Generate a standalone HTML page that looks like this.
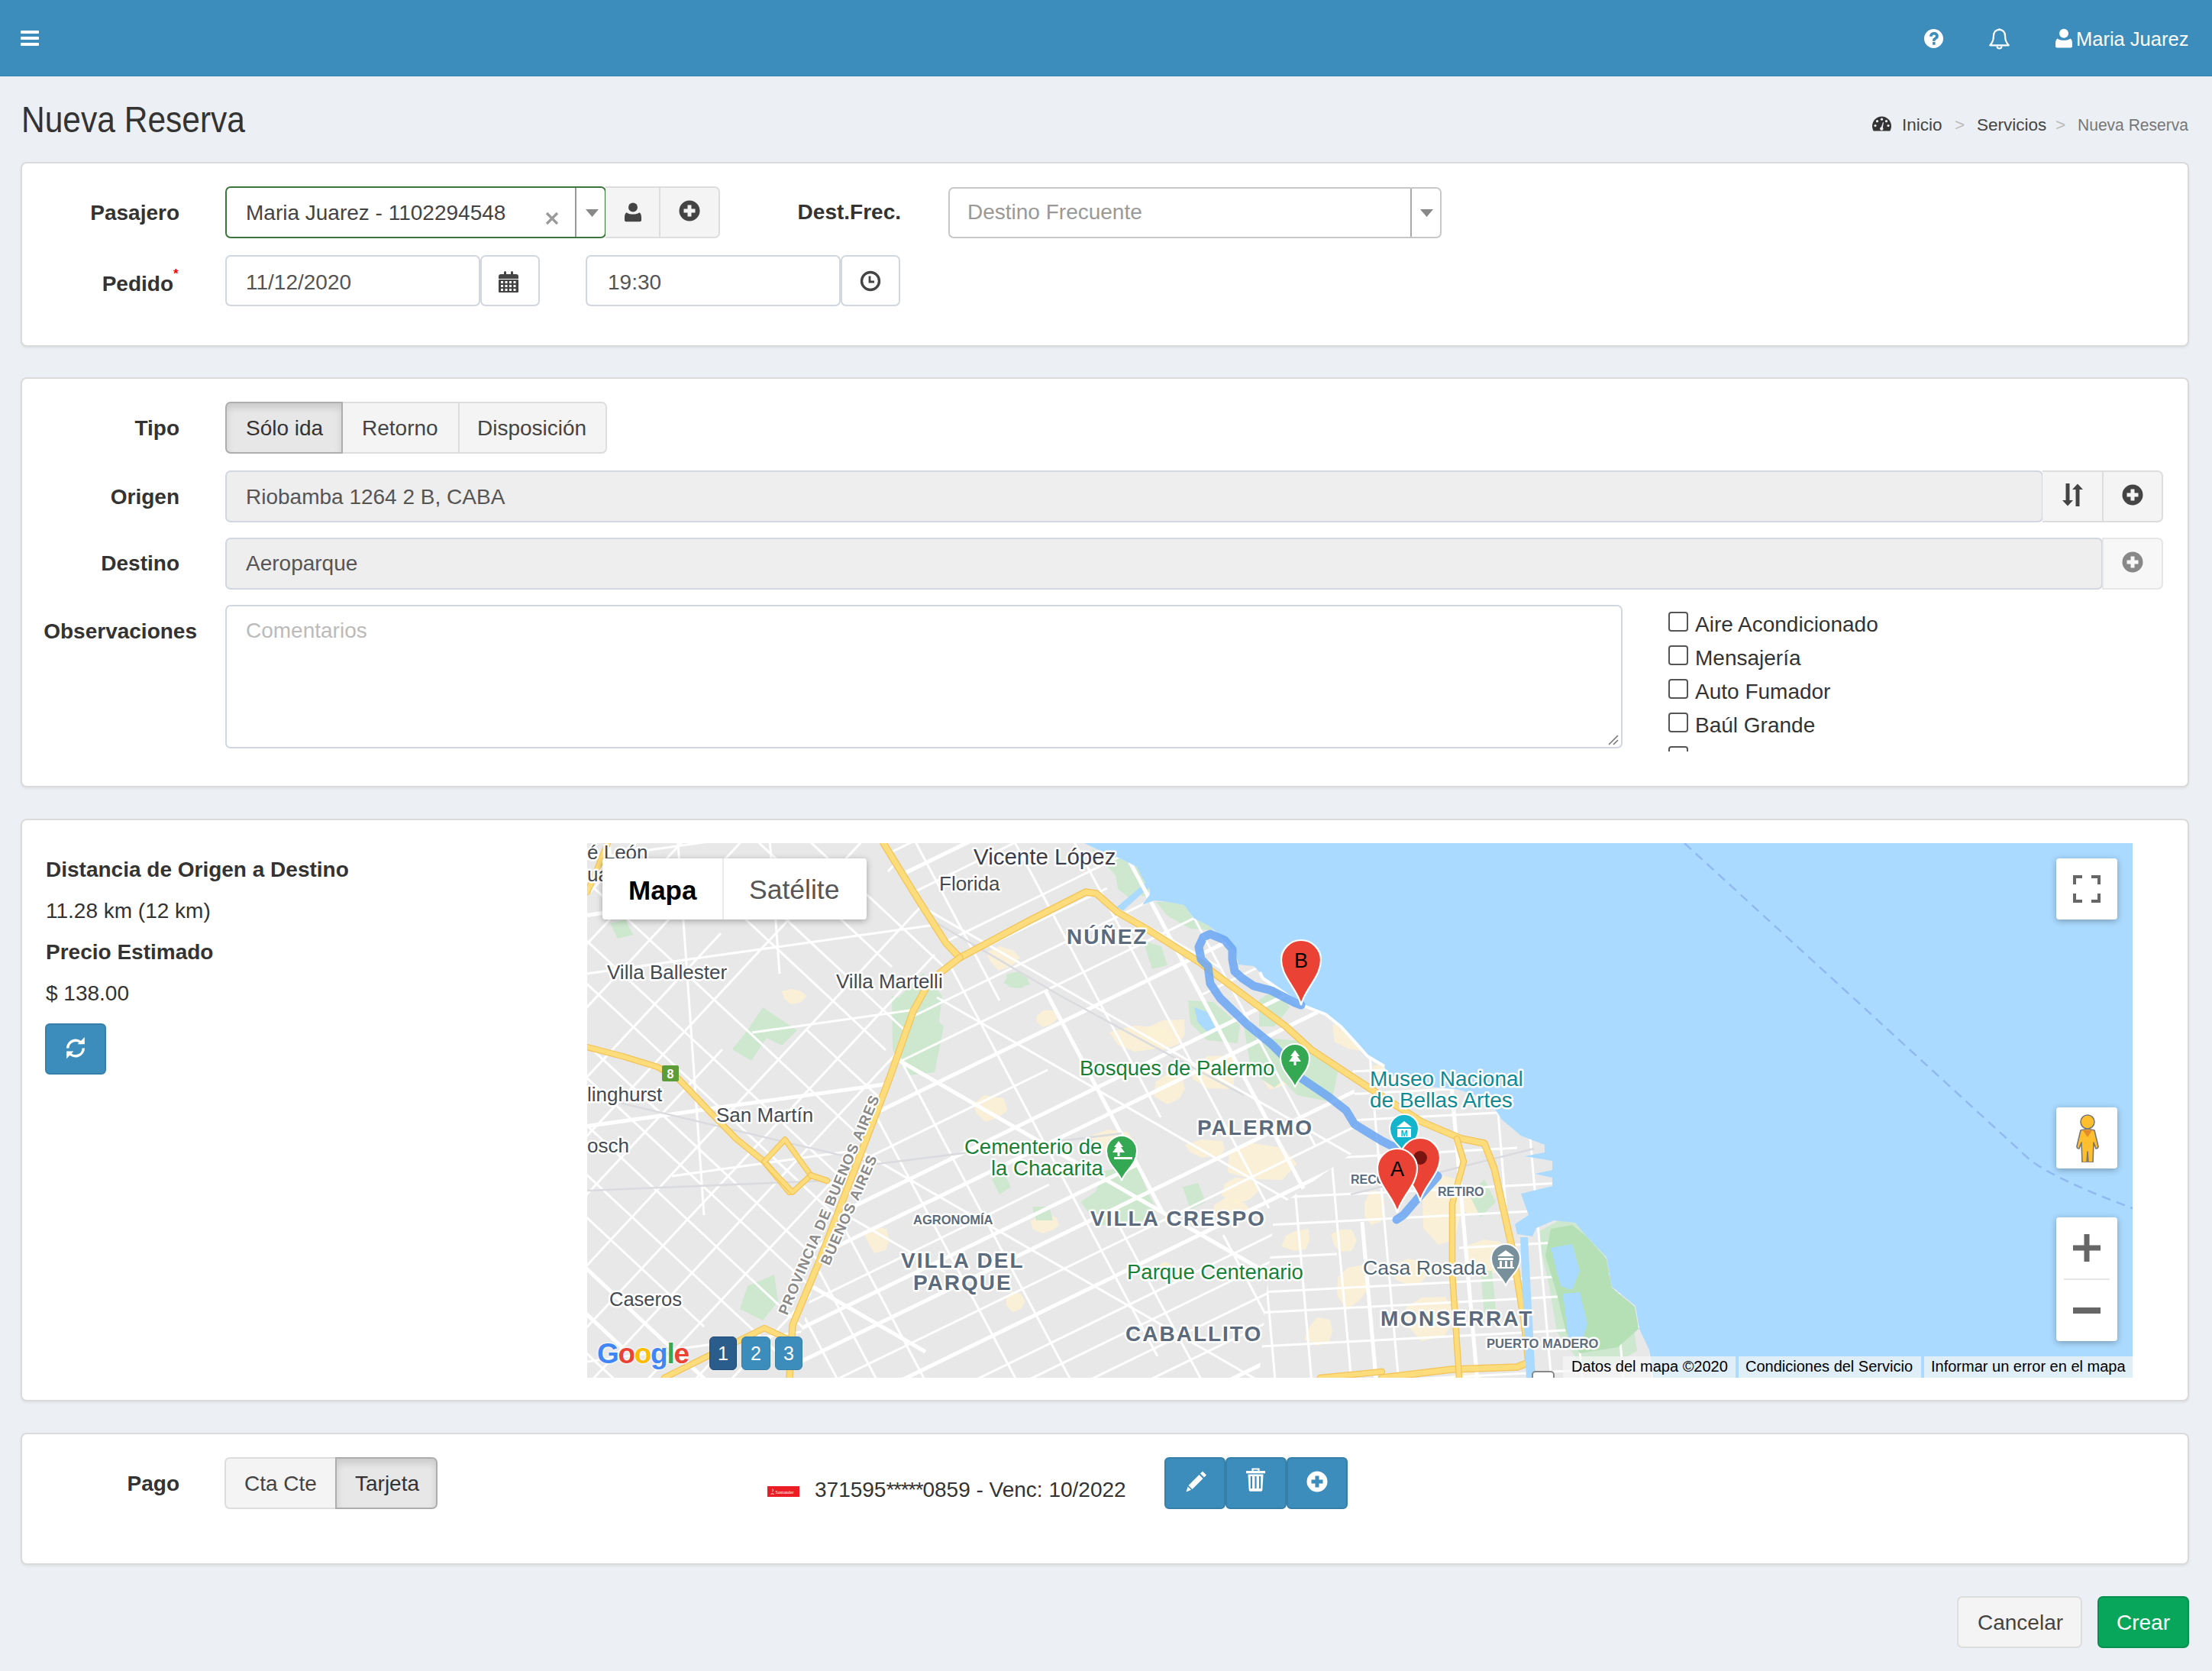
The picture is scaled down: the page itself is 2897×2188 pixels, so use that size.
<!DOCTYPE html>
<html><head><meta charset="utf-8">
<style>
*{box-sizing:border-box;margin:0;padding:0}
html,body{width:2897px;height:2188px;overflow:hidden;background:#ecf0f5;font-family:"Liberation Sans",sans-serif;color:#333}
.a{position:absolute}
.t{position:absolute;line-height:1;white-space:nowrap}
.hdr{left:0;top:0;width:2897px;height:100px;background:#3c8dbc;border-bottom:1px solid #2e83b5}
.box{position:absolute;left:27px;width:2840px;background:#fff;border:2px solid #dadada;border-radius:8px;box-shadow:0 2px 3px rgba(0,0,0,.06)}
.lbl{position:absolute;font-weight:700;font-size:28px;line-height:1;white-space:nowrap;text-align:right;color:#333}
.inp{position:absolute;background:#fff;border:2px solid #d2d6de;border-radius:7px}
.ro{background:#eee}
.txt{font-size:28px;color:#555}
.btn{position:absolute;background:#f4f4f4;border:2px solid #ddd;color:#444}
.bp{position:absolute;background:#3c8dbc;border:2px solid #367fa9}
</style></head><body>
<!-- HEADER -->
<div class="a hdr"></div>
<div class="a" style="left:27px;top:40px;width:24px;height:4px;background:#fff;border-radius:1px"></div>
<div class="a" style="left:27px;top:48px;width:24px;height:4px;background:#fff;border-radius:1px"></div>
<div class="a" style="left:27px;top:56px;width:24px;height:4px;background:#fff;border-radius:1px"></div>


<!-- header right -->
<svg class="a" style="left:2520px;top:38px" width="25" height="25" viewBox="0 0 24 24"><circle cx="12" cy="12" r="12" fill="#fff"/><path d="M6.8,9.3 C6.8,5.8 9.3,3.8 12.4,3.8 C15.6,3.8 18.1,5.8 18.1,8.8 C18.1,11.2 16.6,12.3 15.1,13.2 C14.3,13.7 14,14.1 14,14.8 V15.2 H10.6 V14.4 C10.6,12.6 11.4,11.6 12.8,10.8 C13.8,10.2 14.4,9.7 14.4,8.9 C14.4,7.9 13.6,7.2 12.4,7.2 C11.2,7.2 10.4,8 10.3,9.3 z" fill="#3c8dbc"/><rect x="10.6" y="16.4" width="3.4" height="3.5" fill="#3c8dbc"/></svg>
<svg class="a" style="left:2605px;top:35px" width="27" height="30" viewBox="0 0 27 30"><path d="M13.5 2.2v1.6M13.5 3.8c-5 0-7.6 3.8-7.6 8.6 0 5.4-1.4 8.4-4.6 11.9h24.4c-3.2-3.5-4.6-6.5-4.6-11.9 0-4.8-2.6-8.6-7.6-8.6z" fill="none" stroke="#fff" stroke-width="2.2" stroke-linejoin="round"/><path d="M10.5 25.5a3 3 0 0 0 6 0" fill="none" stroke="#fff" stroke-width="2"/></svg>
<svg class="a" style="left:2692px;top:37px" width="22" height="26" viewBox="0 0 22 26"><circle cx="11" cy="6.8" r="6" fill="#fff"/><path d="M2.5 13.5c2 1.8 4.7 2.3 8.5 2.3s6.5-.5 8.5-2.3c1.7 1.2 2.5 3.2 2.5 6.5v3.5c0 1.2-.9 2-2 2H2c-1.1 0-2-.8-2-2V20c0-3.3.8-5.3 2.5-6.5z" fill="#fff"/></svg>
<div class="t" style="left:2719px;top:39px;font-size:25.5px;color:#fff">Maria Juarez</div>

<!-- breadcrumb -->
<svg class="a" style="left:2452px;top:152px" width="25" height="20" viewBox="0 0 25 20"><path d="M12.5 0.5C5.6 0.5 0 6.1 0 13c0 2.3.6 4.5 1.7 6.4h21.6c1.1-1.9 1.7-4.1 1.7-6.4C25 6.1 19.4.5 12.5.5z" fill="#333"/><circle cx="12.5" cy="4.2" r="1.6" fill="#ecf0f5"/><circle cx="6.5" cy="6.7" r="1.6" fill="#ecf0f5"/><circle cx="18.5" cy="6.7" r="1.6" fill="#ecf0f5"/><circle cx="4" cy="12.5" r="1.6" fill="#ecf0f5"/><circle cx="21" cy="12.5" r="1.6" fill="#ecf0f5"/><path d="M11 17l3-9 1 .4-1.7 8.8z" fill="#ecf0f5"/><circle cx="12.3" cy="16.5" r="2.2" fill="#ecf0f5"/></svg>
<div class="t" style="left:2491px;top:153px;font-size:22.5px;color:#444">Inicio</div>
<div class="t" style="left:2560px;top:153px;font-size:22.5px;color:#bbb">&gt;</div>
<div class="t" style="left:2589px;top:153px;font-size:22.5px;color:#444">Servicios</div>
<div class="t" style="left:2692px;top:153px;font-size:22.5px;color:#bbb">&gt;</div>
<div class="t" style="left:2721px;top:153px;font-size:22.5px;color:#777;transform:scaleX(.935);transform-origin:0 0">Nueva Reserva</div>

<div class="t" style="left:28px;top:133px;font-size:47.5px;color:#333;transform:scaleX(.895);transform-origin:0 0">Nueva Reserva</div>

<!-- BOX 1 -->
<div class="box" style="top:212px;height:242px"></div>


<!-- BOX1 content -->
<div class="lbl" style="left:0;width:235px;top:265px">Pasajero</div>
<div class="a" style="left:295px;top:244px;width:499px;height:68px;border:2px solid #3c763d;border-radius:7px;background:#fff"></div>
<div class="a" style="left:753px;top:246px;width:2px;height:64px;background:#999"></div>
<div class="t txt" style="left:322px;top:265px;color:#444">Maria Juarez - 1102294548</div>
<svg class="a" style="left:714px;top:277px" width="18" height="18" viewBox="0 0 18 18"><path d="M2 2L16 16M16 2L2 16" stroke="#999" stroke-width="3.2"/></svg>
<svg class="a" style="left:767px;top:274px" width="17" height="10" viewBox="0 0 17 10"><path d="M0 0h17L8.5 10z" fill="#888"/></svg>
<div class="btn" style="left:793px;top:244px;width:72px;height:68px;border-left:none"></div>
<div class="btn" style="left:863px;top:244px;width:80px;height:68px;border-radius:0 7px 7px 0"></div>
<svg class="a" style="left:818px;top:265px" width="22" height="26" viewBox="0 0 22 26"><circle cx="11" cy="6.5" r="6" fill="#444"/><path d="M2.5 13.2c2 1.8 4.7 2.3 8.5 2.3s6.5-.5 8.5-2.3c1.7 1.2 2.5 3.2 2.5 6.5v3.5c0 1.2-.9 2-2 2H2c-1.1 0-2-.8-2-2v-3.5c0-3.3.8-5.3 2.5-6.5z" fill="#444"/></svg>
<svg class="a" style="left:889px;top:262px" width="28" height="28" viewBox="0 0 28 28"><circle cx="14" cy="14" r="13.5" fill="#444"/><path d="M11.5 6.5h5v5h5v5h-5v5h-5v-5h-5v-5h5z" fill="#f4f4f4"/></svg>

<div class="lbl" style="left:900px;width:280px;top:264px">Dest.Frec.</div>
<div class="a" style="left:1242px;top:245px;width:646px;height:67px;border:2px solid #c8c8c8;border-radius:7px;background:#fff"></div>
<div class="a" style="left:1847px;top:247px;width:2px;height:63px;background:#aaa"></div>
<div class="t txt" style="left:1267px;top:264px;color:#999">Destino Frecuente</div>
<svg class="a" style="left:1860px;top:274px" width="17" height="10" viewBox="0 0 17 10"><path d="M0 0h17L8.5 10z" fill="#888"/></svg>

<div class="lbl" style="left:0;width:227px;top:358px">Pedido</div>
<div class="t" style="left:227px;top:350px;font-size:17px;color:#f00;font-weight:700">*</div>
<div class="inp" style="left:295px;top:334px;width:334px;height:67px"></div>
<div class="inp" style="left:629px;top:334px;width:78px;height:67px"></div>
<div class="t txt" style="left:322px;top:356px">11/12/2020</div>
<svg class="a" style="left:653px;top:354px" width="26" height="29" viewBox="0 0 26 29"><path d="M3 5h4V2.5a1.5 1.5 0 0 1 3 0V5h6V2.5a1.5 1.5 0 0 1 3 0V5h4a3 3 0 0 1 3 3v3H0V8a3 3 0 0 1 3-3z" fill="#444"/><rect x="0" y="12" width="26" height="17" rx="1" fill="#444"/><g fill="#fff"><rect x="3" y="14" width="3" height="3"/><rect x="8.5" y="14" width="3" height="3"/><rect x="14" y="14" width="3" height="3"/><rect x="19.5" y="14" width="3" height="3"/><rect x="3" y="19" width="3" height="3"/><rect x="8.5" y="19" width="3" height="3"/><rect x="14" y="19" width="3" height="3"/><rect x="19.5" y="19" width="3" height="3"/><rect x="3" y="24" width="3" height="3"/><rect x="8.5" y="24" width="3" height="3"/><rect x="14" y="24" width="3" height="3"/><rect x="19.5" y="24" width="3" height="3"/></g></svg>
<div class="inp" style="left:767px;top:334px;width:334px;height:67px"></div>
<div class="inp" style="left:1101px;top:334px;width:78px;height:67px"></div>
<div class="t txt" style="left:796px;top:356px">19:30</div>
<svg class="a" style="left:1126px;top:354px" width="28" height="28" viewBox="0 0 28 28"><circle cx="14" cy="14" r="11.5" fill="none" stroke="#444" stroke-width="3.4"/><path d="M13 7.5v7.5h6" fill="none" stroke="#444" stroke-width="2.8"/></svg>

<!-- BOX 2 -->
<div class="box" style="top:494px;height:537px"></div>


<!-- BOX2 content -->
<div class="lbl" style="left:0;width:235px;top:547px">Tipo</div>
<div class="btn" style="left:447px;top:526px;width:155px;height:68px;border-left:2px solid #ddd"></div>
<div class="btn" style="left:600px;top:526px;width:195px;height:68px;border-radius:0 7px 7px 0"></div>
<div class="a" style="left:295px;top:526px;width:154px;height:68px;background:#e7e7e7;border:2px solid #adadad;border-radius:7px 0 0 7px;box-shadow:inset 0 6px 10px rgba(0,0,0,.125)"></div>
<div class="t" style="left:322px;top:547px;font-size:28px;color:#333">Sólo ida</div>
<div class="t" style="left:474px;top:547px;font-size:28px;color:#444">Retorno</div>
<div class="t" style="left:625px;top:547px;font-size:28px;color:#444">Disposición</div>

<div class="lbl" style="left:0;width:235px;top:637px">Origen</div>
<div class="inp ro" style="left:295px;top:616px;width:2381px;height:68px"></div>
<div class="t txt" style="left:322px;top:637px">Riobamba 1264 2 B, CABA</div>
<div class="btn" style="left:2675px;top:616px;width:80px;height:68px;border-left:none"></div>
<div class="btn" style="left:2753px;top:616px;width:80px;height:68px;border-radius:0 7px 7px 0"></div>
<svg class="a" style="left:2701px;top:633px" width="29" height="30" viewBox="0 0 29 30"><path d="M4.5 0h5v22h4.5L7 29.5 0 22h4.5z" fill="#444"/><path d="M17.5 30h5V8h4.5L20 .5 13 8h4.5z" fill="#444"/></svg>
<svg class="a" style="left:2779px;top:634px" width="28" height="28" viewBox="0 0 28 28"><circle cx="14" cy="14" r="13.5" fill="#444"/><path d="M11.5 6.5h5v5h5v5h-5v5h-5v-5h-5v-5h5z" fill="#f4f4f4"/></svg>

<div class="lbl" style="left:0;width:235px;top:724px">Destino</div>
<div class="inp ro" style="left:295px;top:704px;width:2459px;height:68px"></div>
<div class="t txt" style="left:322px;top:724px">Aeroparque</div>
<div class="btn" style="left:2753px;top:704px;width:80px;height:68px;border-radius:0 7px 7px 0;background:#f7f7f7;border-color:#e6e6e6"></div>
<svg class="a" style="left:2779px;top:722px" width="28" height="28" viewBox="0 0 28 28"><circle cx="14" cy="14" r="13.5" fill="#888"/><path d="M11.5 6.5h5v5h5v5h-5v5h-5v-5h-5v-5h5z" fill="#f7f7f7"/></svg>

<div class="lbl" style="left:0;width:258px;top:813px">Observaciones</div>
<div class="inp" style="left:295px;top:792px;width:1830px;height:188px"></div>
<div class="t txt" style="left:322px;top:812px;color:#bbb">Comentarios</div>
<svg class="a" style="left:2104px;top:960px" width="16" height="16" viewBox="0 0 16 16"><path d="M15 3L3 15M15 9L9 15" stroke="#777" stroke-width="1.6"/></svg>

<div class="a" style="left:2150px;top:795px;width:400px;height:189px;overflow:hidden">
 <div class="a" style="left:35px;top:6px;width:26px;height:26px;border:2px solid #555;border-radius:4px;background:#fff"></div>
 <div class="t" style="left:70px;top:9px;font-size:28px;color:#333">Aire Acondicionado</div>
 <div class="a" style="left:35px;top:50px;width:26px;height:26px;border:2px solid #555;border-radius:4px;background:#fff"></div>
 <div class="t" style="left:70px;top:53px;font-size:28px;color:#333">Mensajería</div>
 <div class="a" style="left:35px;top:94px;width:26px;height:26px;border:2px solid #555;border-radius:4px;background:#fff"></div>
 <div class="t" style="left:70px;top:97px;font-size:28px;color:#333">Auto Fumador</div>
 <div class="a" style="left:35px;top:138px;width:26px;height:26px;border:2px solid #555;border-radius:4px;background:#fff"></div>
 <div class="t" style="left:70px;top:141px;font-size:28px;color:#333">Baúl Grande</div>
 <div class="a" style="left:35px;top:182px;width:26px;height:26px;border:2px solid #555;border-radius:4px;background:#fff"></div>
 <div class="t" style="left:70px;top:185px;font-size:28px;color:#333">Con Mascota</div>
</div>

<!-- BOX 3 -->
<div class="box" style="top:1072px;height:763px"></div>


<!-- BOX3 content -->
<div class="t" style="left:60px;top:1125px;font-size:28px;font-weight:700;color:#333">Distancia de Origen a Destino</div>
<div class="t" style="left:60px;top:1179px;font-size:28px;color:#333">11.28 km (12 km)</div>
<div class="t" style="left:60px;top:1233px;font-size:28px;font-weight:700;color:#333">Precio Estimado</div>
<div class="t" style="left:60px;top:1287px;font-size:28px;color:#333">$ 138.00</div>
<div class="bp" style="left:59px;top:1340px;width:80px;height:67px;border-radius:6px"></div>
<svg class="a" style="left:85px;top:1358px" width="28" height="29" viewBox="0 0 28 29"><path d="M3.7,14.5 A10.3,10.3 0 0 1 22.4,8.6" fill="none" stroke="#fff" stroke-width="3.5"/><path d="M25.8,0V9.2H16.6z" fill="#fff"/><path d="M24.3,14.5 A10.3,10.3 0 0 1 5.6,20.4" fill="none" stroke="#fff" stroke-width="3.5"/><path d="M2.2,28.2V18.6h9.2z" fill="#fff"/></svg>
<!-- MAP -->
<div class="a" id="map" style="left:769px;top:1104px;width:2024px;height:700px;background:#e5e3df;overflow:hidden">
<!--MAPSTART-->
<svg class="a" style="left:0;top:0" width="2024" height="700" viewBox="0 0 2024 700">
<rect width="2024" height="700" fill="#e8e8e8"/>
<polygon points="567,150 557,160 539,167 528,155 523,143 540,135 557,140" fill="#fbf1d4" opacity=".85"/>
<polygon points="616,230 608,237 597,241 589,234 589,226 597,219 612,219" fill="#fbf1d4" opacity=".85"/>
<polygon points="783,250 775,263 753,271 729,261 734,241 754,232 782,231" fill="#fbf1d4" opacity=".85"/>
<polygon points="848,300 846,322 813,321 793,309 794,292 813,279 846,278" fill="#fbf1d4" opacity=".85"/>
<polygon points="920,290 916,316 894,323 880,303 878,276 896,266 912,270" fill="#fbf1d4" opacity=".85"/>
<polygon points="717,390 712,404 683,405 664,396 660,383 683,375 708,379" fill="#fbf1d4" opacity=".85"/>
<polygon points="930,420 910,441 871,440 839,431 840,409 868,392 911,399" fill="#fbf1d4" opacity=".85"/>
<polygon points="1021,250 1019,273 996,269 979,260 976,238 996,231 1015,231" fill="#fbf1d4" opacity=".85"/>
<polygon points="1065,300 1064,314 1045,318 1031,307 1029,292 1046,286 1064,286" fill="#fbf1d4" opacity=".85"/>
<polygon points="1145,480 1136,519 1115,526 1095,504 1094,455 1115,434 1136,439" fill="#fbf1d4" opacity=".85"/>
<polygon points="1202,540 1199,561 1173,565 1149,553 1151,528 1174,519 1196,522" fill="#fbf1d4" opacity=".85"/>
<polygon points="1026,580 1011,599 995,611 982,592 983,569 996,556 1017,552" fill="#fbf1d4" opacity=".85"/>
<polygon points="976,640 971,654 956,658 939,650 946,633 956,621 973,624" fill="#fbf1d4" opacity=".85"/>
<polygon points="1138,620 1123,645 1092,652 1074,631 1072,608 1093,595 1124,594" fill="#fbf1d4" opacity=".85"/>
<polygon points="869,480 852,490 836,493 821,486 821,474 835,465 856,467" fill="#fbf1d4" opacity=".85"/>
<polygon points="618,500 609,507 596,511 583,505 581,495 595,486 614,490" fill="#fbf1d4" opacity=".85"/>
<polygon points="396,520 391,533 376,537 369,525 363,512 376,502 392,505" fill="#fbf1d4" opacity=".85"/>
<polygon points="288,200 279,209 267,211 258,204 255,194 267,191 278,193" fill="#fbf1d4" opacity=".85"/>
<polygon points="574,600 568,610 557,614 549,605 549,595 557,587 568,590" fill="#fbf1d4" opacity=".85"/>
<polygon points="1172,700 1161,705 1144,709 1127,704 1132,697 1145,693 1164,694" fill="#fbf1d4" opacity=".85"/>
<polygon points="775,560 768,568 756,574 742,566 746,555 756,548 768,553" fill="#fbf1d4" opacity=".85"/>
<polygon points="946,520 941,532 926,534 909,528 915,514 927,508 945,505" fill="#fbf1d4" opacity=".85"/>
<polygon points="551,349 539,359 522,365 510,354 505,342 520,330 545,334" fill="#fbf1d4" opacity=".85"/>
<polygon points="769,257 747,269 717,273 695,264 684,248 716,239 753,241" fill="#fbf1d4" opacity=".85"/>
<polygon points="783,322 776,334 760,342 743,332 744,313 760,302 779,306" fill="#fbf1d4" opacity=".85"/>
<polygon points="882,453 867,467 847,473 831,461 835,446 849,438 867,439" fill="#fbf1d4" opacity=".85"/>
<polygon points="835,400 830,409 805,412 789,404 783,395 805,388 832,390" fill="#fbf1d4" opacity=".85"/>
<polygon points="1045,480 1039,496 1027,500 1018,489 1018,471 1026,455 1042,457" fill="#fbf1d4" opacity=".85"/>
<polygon points="1179,470 1170,482 1156,487 1143,478 1149,464 1156,453 1172,455" fill="#fbf1d4" opacity=".85"/>
<polygon points="1008,520 1001,534 986,535 978,526 974,512 987,506 1001,506" fill="#fbf1d4" opacity=".85"/>
<polygon points="1105,560 1092,575 1076,579 1058,571 1060,550 1076,544 1090,547" fill="#fbf1d4" opacity=".85"/>
<polygon points="230,215 275,245 255,265 235,255 215,285 190,270 210,245" fill="#cde8cf"/>
<polygon points="440,170 465,200 460,240 420,255 400,230 410,200" fill="#cde8cf"/>
<polygon points="555,170 575,175 580,185 560,190 545,183" fill="#cde8cf"/>
<polygon points="126,55 150,68 140,82 118,72" fill="#cde8cf"/>
<polygon points="210,580 245,565 250,600 230,625 200,610" fill="#cde8cf"/>
<polygon points="880,205 905,190 920,215 900,240 880,240" fill="#cde8cf"/>
<polygon points="860,240 900,260 925,300 900,320 870,300" fill="#cde8cf"/>
<polygon points="675,430 720,420 735,460 700,480 665,460" fill="#cde8cf"/>
<polygon points="780,450 800,445 810,470 790,480" fill="#cde8cf"/>
<polygon points="690,30 720,20 735,55 715,75 695,60" fill="#cde8cf"/>
<polygon points="1244,510 1280,490 1320,505 1335,545 1340,600 1370,630 1375,665 1330,690 1300,680 1270,640 1260,580" fill="#cde8cf"/>
<polygon points="1170,560 1185,560 1190,610 1175,620" fill="#cde8cf"/>
<polygon points="1155,460 1175,440 1190,470 1170,490" fill="#cde8cf"/>
<polygon points="530,440 545,430 555,450 540,460" fill="#cde8cf"/>
<polygon points="30,105 50,100 60,120 40,125" fill="#cde8cf"/>
<polygon points="660,8 698,20 720,31 727,45 737,61 730,70 705,62 690,40" fill="#cde8cf"/>
<polygon points="745,77 761,77 782,81 794,98 814,108 820,114 790,112 760,95" fill="#cde8cf"/>
<polygon points="728,128 752,135 760,160 740,165" fill="#cde8cf"/>
<polygon points="787,206 820,208 855,238 852,262 812,258 790,236" fill="#cde8cf"/>
<polygon points="893,255 940,260 983,300 975,339 930,330 900,300" fill="#cde8cf"/>
<polygon points="549,172 565,168 578,178 570,190 552,188" fill="#cde8cf"/>
<polygon points="399,200 430,205 467,240 455,300 420,304 400,270" fill="#cde8cf"/>
<polygon points="646,470 690,440 730,450 746,480 720,502 670,500" fill="#cde8cf"/>
<polygon points="583,476 605,476 610,494 588,494" fill="#cde8cf"/>
<polygon points="795,215 815,222 830,245 815,250 800,235" fill="#aadaff"/>
<polygon points="692,85 737,47 741,53 698,92" fill="#aadaff"/>
<defs><clipPath id="cnw"><polygon points="0,0 388,0 470,131 488,150 427,220 380,350 305,545 265,700 0,700"/></clipPath><clipPath id="cne"><polygon points="388,0 700,0 1000,260 1010,400 900,480 880,700 265,700 305,545 380,350 427,220 488,150 470,131"/></clipPath><clipPath id="ce"><polygon points="1000,260 1400,260 1400,700 880,700 900,480 1010,400"/></clipPath></defs>
<g clip-path="url(#cnw)">
<line x1="2001" y1="-13" x2="2097" y2="76" stroke="#fff" stroke-width="3.0"/>
<line x1="1864" y1="-93" x2="2239" y2="257" stroke="#fff" stroke-width="3.0"/>
<line x1="1665" y1="-204" x2="1913" y2="27" stroke="#fff" stroke-width="3.0"/>
<line x1="1710" y1="-82" x2="2038" y2="224" stroke="#fff" stroke-width="3.0"/>
<line x1="1671" y1="-45" x2="2004" y2="265" stroke="#fff" stroke-width="3.0"/>
<line x1="2004" y1="265" x2="2170" y2="420" stroke="#fff" stroke-width="3.0"/>
<line x1="1624" y1="-21" x2="1898" y2="234" stroke="#fff" stroke-width="5.1"/>
<line x1="1992" y1="322" x2="2125" y2="446" stroke="#fff" stroke-width="5.1"/>
<line x1="1436" y1="-151" x2="1619" y2="20" stroke="#fff" stroke-width="3.0"/>
<line x1="1619" y1="20" x2="1935" y2="314" stroke="#fff" stroke-width="3.0"/>
<line x1="1345" y1="-160" x2="1524" y2="7" stroke="#fff" stroke-width="5.1"/>
<line x1="1524" y1="7" x2="1711" y2="182" stroke="#fff" stroke-width="5.1"/>
<line x1="1486" y1="19" x2="1854" y2="362" stroke="#fff" stroke-width="3.0"/>
<line x1="1854" y1="362" x2="2175" y2="661" stroke="#fff" stroke-width="3.0"/>
<line x1="1137" y1="-232" x2="1465" y2="74" stroke="#fff" stroke-width="3.0"/>
<line x1="1465" y1="74" x2="1728" y2="320" stroke="#fff" stroke-width="3.0"/>
<line x1="1728" y1="320" x2="1841" y2="425" stroke="#fff" stroke-width="3.0"/>
<line x1="1841" y1="425" x2="2202" y2="762" stroke="#fff" stroke-width="3.0"/>
<line x1="1117" y1="-173" x2="1321" y2="18" stroke="#fff" stroke-width="3.0"/>
<line x1="1321" y1="18" x2="1688" y2="360" stroke="#fff" stroke-width="3.0"/>
<line x1="1688" y1="360" x2="1853" y2="514" stroke="#fff" stroke-width="3.0"/>
<line x1="1853" y1="514" x2="1972" y2="625" stroke="#fff" stroke-width="3.0"/>
<line x1="1021" y1="-221" x2="1410" y2="142" stroke="#fff" stroke-width="5.1"/>
<line x1="1410" y1="142" x2="1709" y2="421" stroke="#fff" stroke-width="5.1"/>
<line x1="1709" y1="421" x2="1876" y2="577" stroke="#fff" stroke-width="5.1"/>
<line x1="1876" y1="577" x2="2058" y2="747" stroke="#fff" stroke-width="5.1"/>
<line x1="1031" y1="-169" x2="1222" y2="9" stroke="#fff" stroke-width="3.0"/>
<line x1="1222" y1="9" x2="1487" y2="257" stroke="#fff" stroke-width="3.0"/>
<line x1="1155" y1="-11" x2="1276" y2="102" stroke="#fff" stroke-width="3.0"/>
<line x1="1276" y1="102" x2="1646" y2="447" stroke="#fff" stroke-width="3.0"/>
<line x1="1046" y1="-35" x2="1430" y2="323" stroke="#fff" stroke-width="5.1"/>
<line x1="1430" y1="323" x2="1686" y2="562" stroke="#fff" stroke-width="5.1"/>
<line x1="1686" y1="562" x2="2036" y2="887" stroke="#fff" stroke-width="5.1"/>
<line x1="912" y1="-104" x2="1162" y2="129" stroke="#fff" stroke-width="3.0"/>
<line x1="1162" y1="129" x2="1449" y2="397" stroke="#fff" stroke-width="3.0"/>
<line x1="1449" y1="397" x2="1748" y2="675" stroke="#fff" stroke-width="3.0"/>
<line x1="1748" y1="675" x2="1909" y2="825" stroke="#fff" stroke-width="3.0"/>
<line x1="727" y1="-218" x2="1027" y2="62" stroke="#fff" stroke-width="3.0"/>
<line x1="1027" y1="62" x2="1229" y2="250" stroke="#fff" stroke-width="3.0"/>
<line x1="1229" y1="250" x2="1543" y2="543" stroke="#fff" stroke-width="3.0"/>
<line x1="1543" y1="543" x2="1894" y2="870" stroke="#fff" stroke-width="3.0"/>
<line x1="774" y1="-94" x2="944" y2="64" stroke="#fff" stroke-width="3.0"/>
<line x1="1326" y1="421" x2="1653" y2="725" stroke="#fff" stroke-width="3.0"/>
<line x1="702" y1="-104" x2="826" y2="12" stroke="#fff" stroke-width="3.0"/>
<line x1="826" y1="12" x2="990" y2="165" stroke="#fff" stroke-width="3.0"/>
<line x1="1301" y1="455" x2="1582" y2="717" stroke="#fff" stroke-width="3.0"/>
<line x1="653" y1="-98" x2="858" y2="93" stroke="#fff" stroke-width="3.0"/>
<line x1="858" y1="93" x2="979" y2="206" stroke="#fff" stroke-width="3.0"/>
<line x1="979" y1="206" x2="1103" y2="322" stroke="#fff" stroke-width="3.0"/>
<line x1="1103" y1="322" x2="1359" y2="560" stroke="#fff" stroke-width="3.0"/>
<line x1="1359" y1="560" x2="1680" y2="860" stroke="#fff" stroke-width="3.0"/>
<line x1="503" y1="-193" x2="742" y2="30" stroke="#fff" stroke-width="3.0"/>
<line x1="742" y1="30" x2="946" y2="220" stroke="#fff" stroke-width="3.0"/>
<line x1="946" y1="220" x2="1035" y2="303" stroke="#fff" stroke-width="3.0"/>
<line x1="1035" y1="303" x2="1306" y2="556" stroke="#fff" stroke-width="3.0"/>
<line x1="1306" y1="556" x2="1649" y2="875" stroke="#fff" stroke-width="3.0"/>
<line x1="500" y1="-116" x2="712" y2="82" stroke="#fff" stroke-width="3.0"/>
<line x1="712" y1="82" x2="979" y2="331" stroke="#fff" stroke-width="3.0"/>
<line x1="979" y1="331" x2="1343" y2="670" stroke="#fff" stroke-width="3.0"/>
<line x1="1343" y1="670" x2="1582" y2="893" stroke="#fff" stroke-width="3.0"/>
<line x1="479" y1="-70" x2="784" y2="215" stroke="#fff" stroke-width="3.0"/>
<line x1="1039" y1="453" x2="1382" y2="773" stroke="#fff" stroke-width="3.0"/>
<line x1="413" y1="-71" x2="772" y2="265" stroke="#fff" stroke-width="3.0"/>
<line x1="772" y1="265" x2="883" y2="368" stroke="#fff" stroke-width="3.0"/>
<line x1="883" y1="368" x2="1132" y2="600" stroke="#fff" stroke-width="3.0"/>
<line x1="1132" y1="600" x2="1377" y2="828" stroke="#fff" stroke-width="3.0"/>
<line x1="376" y1="-54" x2="597" y2="151" stroke="#fff" stroke-width="3.0"/>
<line x1="674" y1="301" x2="945" y2="554" stroke="#fff" stroke-width="3.0"/>
<line x1="1099" y1="698" x2="1403" y2="981" stroke="#fff" stroke-width="3.0"/>
<line x1="46" y1="-231" x2="354" y2="56" stroke="#fff" stroke-width="3.0"/>
<line x1="354" y1="56" x2="624" y2="308" stroke="#fff" stroke-width="3.0"/>
<line x1="1017" y1="674" x2="1350" y2="985" stroke="#fff" stroke-width="3.0"/>
<line x1="54" y1="-160" x2="399" y2="162" stroke="#fff" stroke-width="3.0"/>
<line x1="219" y1="61" x2="415" y2="244" stroke="#fff" stroke-width="3.0"/>
<line x1="415" y1="244" x2="564" y2="383" stroke="#fff" stroke-width="3.0"/>
<line x1="564" y1="383" x2="782" y2="586" stroke="#fff" stroke-width="3.0"/>
<line x1="782" y1="586" x2="1089" y2="872" stroke="#fff" stroke-width="3.0"/>
<line x1="182" y1="76" x2="391" y2="271" stroke="#fff" stroke-width="3.0"/>
<line x1="-308" y1="-311" x2="21" y2="-5" stroke="#fff" stroke-width="3.0"/>
<line x1="288" y1="245" x2="576" y2="513" stroke="#fff" stroke-width="3.0"/>
<line x1="576" y1="513" x2="967" y2="878" stroke="#fff" stroke-width="3.0"/>
<line x1="-196" y1="-132" x2="-8" y2="43" stroke="#fff" stroke-width="3.0"/>
<line x1="-8" y1="43" x2="234" y2="268" stroke="#fff" stroke-width="3.0"/>
<line x1="234" y1="268" x2="367" y2="393" stroke="#fff" stroke-width="3.0"/>
<line x1="367" y1="393" x2="555" y2="568" stroke="#fff" stroke-width="3.0"/>
<line x1="555" y1="568" x2="664" y2="670" stroke="#fff" stroke-width="3.0"/>
<line x1="664" y1="670" x2="899" y2="889" stroke="#fff" stroke-width="3.0"/>
<line x1="-341" y1="-190" x2="36" y2="162" stroke="#fff" stroke-width="3.0"/>
<line x1="36" y1="162" x2="248" y2="359" stroke="#fff" stroke-width="3.0"/>
<line x1="248" y1="359" x2="636" y2="722" stroke="#fff" stroke-width="3.0"/>
<line x1="-46" y1="142" x2="49" y2="230" stroke="#fff" stroke-width="3.0"/>
<line x1="49" y1="230" x2="397" y2="555" stroke="#fff" stroke-width="3.0"/>
<line x1="397" y1="555" x2="572" y2="718" stroke="#fff" stroke-width="3.0"/>
<line x1="-32" y1="234" x2="327" y2="569" stroke="#fff" stroke-width="3.0"/>
<line x1="-211" y1="111" x2="128" y2="427" stroke="#fff" stroke-width="3.0"/>
<line x1="128" y1="427" x2="341" y2="626" stroke="#fff" stroke-width="3.0"/>
<line x1="341" y1="626" x2="524" y2="796" stroke="#fff" stroke-width="3.0"/>
<line x1="-216" y1="170" x2="15" y2="384" stroke="#fff" stroke-width="3.0"/>
<line x1="15" y1="384" x2="217" y2="573" stroke="#fff" stroke-width="3.0"/>
<line x1="217" y1="573" x2="453" y2="793" stroke="#fff" stroke-width="3.0"/>
<line x1="-267" y1="186" x2="41" y2="473" stroke="#fff" stroke-width="3.0"/>
<line x1="41" y1="473" x2="427" y2="833" stroke="#fff" stroke-width="3.0"/>
<line x1="-105" y1="393" x2="153" y2="633" stroke="#fff" stroke-width="3.0"/>
<line x1="-137" y1="430" x2="78" y2="631" stroke="#fff" stroke-width="5.1"/>
<line x1="78" y1="631" x2="471" y2="997" stroke="#fff" stroke-width="5.1"/>
<line x1="-121" y1="505" x2="51" y2="665" stroke="#fff" stroke-width="5.1"/>
<line x1="-238" y1="447" x2="99" y2="761" stroke="#fff" stroke-width="3.0"/>
<line x1="3" y1="65" x2="208" y2="-156" stroke="#fff" stroke-width="3.0"/>
<line x1="-102" y1="241" x2="236" y2="-121" stroke="#fff" stroke-width="3.0"/>
<line x1="-276" y1="510" x2="64" y2="146" stroke="#fff" stroke-width="3.0"/>
<line x1="64" y1="146" x2="308" y2="-116" stroke="#fff" stroke-width="3.0"/>
<line x1="-53" y1="363" x2="175" y2="118" stroke="#fff" stroke-width="3.0"/>
<line x1="-15" y1="399" x2="116" y2="259" stroke="#fff" stroke-width="3.0"/>
<line x1="116" y1="259" x2="222" y2="145" stroke="#fff" stroke-width="3.0"/>
<line x1="222" y1="145" x2="311" y2="50" stroke="#fff" stroke-width="3.0"/>
<line x1="311" y1="50" x2="399" y2="-44" stroke="#fff" stroke-width="3.0"/>
<line x1="-152" y1="622" x2="177" y2="270" stroke="#fff" stroke-width="3.0"/>
<line x1="394" y1="37" x2="665" y2="-254" stroke="#fff" stroke-width="3.0"/>
<line x1="-59" y1="616" x2="290" y2="241" stroke="#fff" stroke-width="3.0"/>
<line x1="290" y1="241" x2="438" y2="82" stroke="#fff" stroke-width="3.0"/>
<line x1="438" y1="82" x2="592" y2="-83" stroke="#fff" stroke-width="3.0"/>
<line x1="-109" y1="750" x2="249" y2="367" stroke="#fff" stroke-width="3.0"/>
<line x1="249" y1="367" x2="455" y2="146" stroke="#fff" stroke-width="3.0"/>
<line x1="-312" y1="1044" x2="11" y2="698" stroke="#fff" stroke-width="3.0"/>
<line x1="11" y1="698" x2="97" y2="606" stroke="#fff" stroke-width="3.0"/>
<line x1="97" y1="606" x2="296" y2="392" stroke="#fff" stroke-width="3.0"/>
<line x1="296" y1="392" x2="438" y2="240" stroke="#fff" stroke-width="3.0"/>
<line x1="438" y1="240" x2="541" y2="130" stroke="#fff" stroke-width="3.0"/>
<line x1="541" y1="130" x2="730" y2="-73" stroke="#fff" stroke-width="3.0"/>
<line x1="5" y1="782" x2="189" y2="584" stroke="#fff" stroke-width="3.0"/>
<line x1="189" y1="584" x2="500" y2="251" stroke="#fff" stroke-width="3.0"/>
<line x1="500" y1="251" x2="732" y2="2" stroke="#fff" stroke-width="3.0"/>
<line x1="732" y1="2" x2="1088" y2="-379" stroke="#fff" stroke-width="3.0"/>
<line x1="43" y1="807" x2="167" y2="675" stroke="#fff" stroke-width="3.0"/>
<line x1="268" y1="566" x2="606" y2="204" stroke="#fff" stroke-width="3.0"/>
<line x1="132" y1="763" x2="498" y2="370" stroke="#fff" stroke-width="3.0"/>
<line x1="216" y1="753" x2="363" y2="596" stroke="#fff" stroke-width="3.0"/>
<line x1="363" y1="596" x2="560" y2="384" stroke="#fff" stroke-width="3.0"/>
<line x1="560" y1="384" x2="922" y2="-4" stroke="#fff" stroke-width="3.0"/>
<line x1="922" y1="-4" x2="1007" y2="-95" stroke="#fff" stroke-width="3.0"/>
<line x1="274" y1="781" x2="480" y2="560" stroke="#fff" stroke-width="3.0"/>
<line x1="480" y1="560" x2="724" y2="299" stroke="#fff" stroke-width="3.0"/>
<line x1="724" y1="299" x2="865" y2="148" stroke="#fff" stroke-width="3.0"/>
<line x1="967" y1="38" x2="1188" y2="-199" stroke="#fff" stroke-width="3.0"/>
<line x1="491" y1="619" x2="620" y2="481" stroke="#fff" stroke-width="5.1"/>
<line x1="620" y1="481" x2="834" y2="251" stroke="#fff" stroke-width="5.1"/>
<line x1="834" y1="251" x2="919" y2="160" stroke="#fff" stroke-width="5.1"/>
<line x1="919" y1="160" x2="1278" y2="-225" stroke="#fff" stroke-width="5.1"/>
<line x1="307" y1="886" x2="576" y2="597" stroke="#fff" stroke-width="3.0"/>
<line x1="899" y1="251" x2="1162" y2="-31" stroke="#fff" stroke-width="3.0"/>
<line x1="473" y1="777" x2="811" y2="414" stroke="#fff" stroke-width="3.0"/>
<line x1="811" y1="414" x2="1019" y2="191" stroke="#fff" stroke-width="3.0"/>
<line x1="1019" y1="191" x2="1367" y2="-183" stroke="#fff" stroke-width="3.0"/>
<line x1="458" y1="878" x2="753" y2="562" stroke="#fff" stroke-width="3.0"/>
<line x1="753" y1="562" x2="1084" y2="207" stroke="#fff" stroke-width="3.0"/>
<line x1="1084" y1="207" x2="1381" y2="-112" stroke="#fff" stroke-width="3.0"/>
<line x1="500" y1="925" x2="800" y2="604" stroke="#fff" stroke-width="3.0"/>
<line x1="1038" y1="349" x2="1358" y2="5" stroke="#fff" stroke-width="3.0"/>
<line x1="1358" y1="5" x2="1522" y2="-170" stroke="#fff" stroke-width="3.0"/>
<line x1="532" y1="944" x2="858" y2="595" stroke="#fff" stroke-width="3.0"/>
<line x1="1163" y1="268" x2="1395" y2="19" stroke="#fff" stroke-width="3.0"/>
<line x1="1395" y1="19" x2="1573" y2="-172" stroke="#fff" stroke-width="3.0"/>
<line x1="1033" y1="476" x2="1146" y2="355" stroke="#fff" stroke-width="3.0"/>
<line x1="1146" y1="355" x2="1265" y2="227" stroke="#fff" stroke-width="3.0"/>
<line x1="1265" y1="227" x2="1541" y2="-69" stroke="#fff" stroke-width="3.0"/>
<line x1="938" y1="632" x2="1077" y2="483" stroke="#fff" stroke-width="5.1"/>
<line x1="1077" y1="483" x2="1394" y2="143" stroke="#fff" stroke-width="5.1"/>
<line x1="1394" y1="143" x2="1671" y2="-154" stroke="#fff" stroke-width="5.1"/>
<line x1="955" y1="679" x2="1145" y2="475" stroke="#fff" stroke-width="3.0"/>
<line x1="1145" y1="475" x2="1350" y2="255" stroke="#fff" stroke-width="3.0"/>
<line x1="1350" y1="255" x2="1546" y2="45" stroke="#fff" stroke-width="3.0"/>
<line x1="1546" y1="45" x2="1860" y2="-292" stroke="#fff" stroke-width="3.0"/>
<line x1="832" y1="894" x2="1115" y2="590" stroke="#fff" stroke-width="3.0"/>
<line x1="1115" y1="590" x2="1211" y2="488" stroke="#fff" stroke-width="3.0"/>
<line x1="1211" y1="488" x2="1528" y2="147" stroke="#fff" stroke-width="3.0"/>
<line x1="1032" y1="734" x2="1232" y2="520" stroke="#fff" stroke-width="3.0"/>
<line x1="1232" y1="520" x2="1520" y2="211" stroke="#fff" stroke-width="3.0"/>
<line x1="1084" y1="740" x2="1302" y2="507" stroke="#fff" stroke-width="3.0"/>
<line x1="1302" y1="507" x2="1438" y2="361" stroke="#fff" stroke-width="3.0"/>
<line x1="1438" y1="361" x2="1575" y2="214" stroke="#fff" stroke-width="3.0"/>
<line x1="1575" y1="214" x2="1821" y2="-50" stroke="#fff" stroke-width="3.0"/>
<line x1="984" y1="924" x2="1273" y2="614" stroke="#fff" stroke-width="3.0"/>
<line x1="1273" y1="614" x2="1481" y2="391" stroke="#fff" stroke-width="3.0"/>
<line x1="998" y1="984" x2="1330" y2="627" stroke="#fff" stroke-width="3.0"/>
<line x1="1330" y1="627" x2="1613" y2="324" stroke="#fff" stroke-width="3.0"/>
<line x1="1762" y1="164" x2="1862" y2="57" stroke="#fff" stroke-width="3.0"/>
<line x1="1862" y1="57" x2="1983" y2="-73" stroke="#fff" stroke-width="3.0"/>
<line x1="1106" y1="937" x2="1334" y2="693" stroke="#fff" stroke-width="3.0"/>
<line x1="1334" y1="693" x2="1640" y2="365" stroke="#fff" stroke-width="3.0"/>
<line x1="1640" y1="365" x2="1923" y2="60" stroke="#fff" stroke-width="3.0"/>
<line x1="1357" y1="720" x2="1703" y2="349" stroke="#fff" stroke-width="3.0"/>
<line x1="1703" y1="349" x2="1816" y2="229" stroke="#fff" stroke-width="3.0"/>
<line x1="1816" y1="229" x2="2002" y2="29" stroke="#fff" stroke-width="3.0"/>
<line x1="2002" y1="29" x2="2266" y2="-254" stroke="#fff" stroke-width="3.0"/>
<line x1="1616" y1="536" x2="1711" y2="435" stroke="#fff" stroke-width="5.1"/>
<line x1="1711" y1="435" x2="2069" y2="50" stroke="#fff" stroke-width="5.1"/>
<line x1="1592" y1="620" x2="1822" y2="373" stroke="#fff" stroke-width="3.0"/>
<line x1="1822" y1="373" x2="2020" y2="161" stroke="#fff" stroke-width="3.0"/>
<line x1="2020" y1="161" x2="2138" y2="35" stroke="#fff" stroke-width="3.0"/>
<line x1="1429" y1="866" x2="1637" y2="643" stroke="#fff" stroke-width="3.0"/>
<line x1="1637" y1="643" x2="1840" y2="425" stroke="#fff" stroke-width="3.0"/>
<line x1="1840" y1="425" x2="1985" y2="270" stroke="#fff" stroke-width="3.0"/>
<line x1="1985" y1="270" x2="2339" y2="-111" stroke="#fff" stroke-width="3.0"/>
<line x1="1612" y1="730" x2="1910" y2="410" stroke="#fff" stroke-width="3.0"/>
<line x1="1910" y1="410" x2="2137" y2="167" stroke="#fff" stroke-width="3.0"/>
<line x1="1581" y1="838" x2="1849" y2="551" stroke="#fff" stroke-width="3.0"/>
<line x1="1849" y1="551" x2="2074" y2="310" stroke="#fff" stroke-width="3.0"/>
<line x1="1665" y1="814" x2="1798" y2="672" stroke="#fff" stroke-width="3.0"/>
<line x1="1973" y1="484" x2="2227" y2="212" stroke="#fff" stroke-width="3.0"/>
<line x1="1823" y1="695" x2="1991" y2="515" stroke="#fff" stroke-width="5.1"/>
<line x1="1991" y1="515" x2="2236" y2="252" stroke="#fff" stroke-width="5.1"/>
<line x1="1733" y1="850" x2="1931" y2="638" stroke="#fff" stroke-width="3.0"/>
<line x1="1831" y1="820" x2="2144" y2="485" stroke="#fff" stroke-width="3.0"/>
<line x1="1888" y1="844" x2="2155" y2="559" stroke="#fff" stroke-width="3.0"/>
<line x1="-244" y1="55" x2="223" y2="-11" stroke="#fff" stroke-width="3.0"/>
<line x1="-174" y1="119" x2="130" y2="76" stroke="#fff" stroke-width="5.1"/>
<line x1="-122" y1="188" x2="355" y2="121" stroke="#fff" stroke-width="3.0"/>
<line x1="355" y1="121" x2="850" y2="52" stroke="#fff" stroke-width="3.0"/>
<line x1="1266" y1="-7" x2="1731" y2="-72" stroke="#fff" stroke-width="3.0"/>
<line x1="216" y1="248" x2="701" y2="180" stroke="#fff" stroke-width="3.0"/>
<line x1="701" y1="180" x2="1030" y2="134" stroke="#fff" stroke-width="3.0"/>
<line x1="-157" y1="393" x2="195" y2="343" stroke="#fff" stroke-width="5.1"/>
<line x1="195" y1="343" x2="705" y2="272" stroke="#fff" stroke-width="5.1"/>
<line x1="705" y1="272" x2="1003" y2="230" stroke="#fff" stroke-width="5.1"/>
<line x1="1220" y1="199" x2="1746" y2="125" stroke="#fff" stroke-width="5.1"/>
<line x1="111" y1="436" x2="511" y2="380" stroke="#fff" stroke-width="3.0"/>
<line x1="511" y1="380" x2="734" y2="348" stroke="#fff" stroke-width="3.0"/>
<line x1="1370" y1="259" x2="1642" y2="221" stroke="#fff" stroke-width="3.0"/>
<line x1="1149" y1="392" x2="1408" y2="356" stroke="#fff" stroke-width="5.1"/>
<line x1="1408" y1="356" x2="1895" y2="287" stroke="#fff" stroke-width="5.1"/>
<line x1="-400" y1="735" x2="29" y2="675" stroke="#fff" stroke-width="3.0"/>
<line x1="29" y1="675" x2="423" y2="620" stroke="#fff" stroke-width="3.0"/>
<line x1="1695" y1="441" x2="2190" y2="371" stroke="#fff" stroke-width="3.0"/>
<line x1="417" y1="732" x2="734" y2="687" stroke="#fff" stroke-width="3.0"/>
<line x1="999" y1="650" x2="1340" y2="602" stroke="#fff" stroke-width="3.0"/>
<line x1="1340" y1="602" x2="1531" y2="575" stroke="#fff" stroke-width="3.0"/>
<line x1="1531" y1="575" x2="2033" y2="505" stroke="#fff" stroke-width="3.0"/>
<line x1="1069" y1="745" x2="1334" y2="708" stroke="#fff" stroke-width="5.1"/>
<line x1="1895" y1="629" x2="2066" y2="605" stroke="#fff" stroke-width="5.1"/>
<line x1="1990" y1="-137" x2="2023" y2="334" stroke="#fff" stroke-width="3.0"/>
<line x1="2031" y1="460" x2="2044" y2="641" stroke="#fff" stroke-width="3.0"/>
<line x1="1902" y1="-263" x2="1939" y2="270" stroke="#fff" stroke-width="3.0"/>
<line x1="1939" y1="270" x2="1964" y2="622" stroke="#fff" stroke-width="3.0"/>
<line x1="1964" y1="622" x2="1976" y2="798" stroke="#fff" stroke-width="3.0"/>
<line x1="1830" y1="-276" x2="1862" y2="181" stroke="#fff" stroke-width="3.0"/>
<line x1="1889" y1="569" x2="1910" y2="861" stroke="#fff" stroke-width="3.0"/>
<line x1="1773" y1="-87" x2="1783" y2="62" stroke="#fff" stroke-width="3.0"/>
<line x1="1783" y1="62" x2="1808" y2="414" stroke="#fff" stroke-width="3.0"/>
<line x1="1701" y1="-217" x2="1717" y2="11" stroke="#fff" stroke-width="3.0"/>
<line x1="1643" y1="573" x2="1677" y2="1060" stroke="#fff" stroke-width="3.0"/>
<line x1="1525" y1="-227" x2="1548" y2="111" stroke="#fff" stroke-width="3.0"/>
<line x1="1548" y1="111" x2="1570" y2="415" stroke="#fff" stroke-width="3.0"/>
<line x1="1570" y1="415" x2="1596" y2="795" stroke="#fff" stroke-width="3.0"/>
<line x1="1450" y1="-129" x2="1471" y2="169" stroke="#fff" stroke-width="3.0"/>
<line x1="1471" y1="169" x2="1503" y2="638" stroke="#fff" stroke-width="3.0"/>
<line x1="1503" y1="638" x2="1520" y2="879" stroke="#fff" stroke-width="3.0"/>
<line x1="1371" y1="59" x2="1393" y2="372" stroke="#fff" stroke-width="5.1"/>
<line x1="1283" y1="531" x2="1293" y2="673" stroke="#fff" stroke-width="3.0"/>
<line x1="1173" y1="-150" x2="1209" y2="360" stroke="#fff" stroke-width="3.0"/>
<line x1="1209" y1="360" x2="1241" y2="828" stroke="#fff" stroke-width="3.0"/>
<line x1="1006" y1="-127" x2="1023" y2="118" stroke="#fff" stroke-width="3.0"/>
<line x1="1023" y1="118" x2="1037" y2="325" stroke="#fff" stroke-width="3.0"/>
<line x1="944" y1="-76" x2="968" y2="261" stroke="#fff" stroke-width="3.0"/>
<line x1="871" y1="26" x2="900" y2="441" stroke="#fff" stroke-width="3.0"/>
<line x1="900" y1="441" x2="920" y2="737" stroke="#fff" stroke-width="3.0"/>
<line x1="752" y1="-6" x2="782" y2="424" stroke="#fff" stroke-width="3.0"/>
<line x1="782" y1="424" x2="809" y2="808" stroke="#fff" stroke-width="3.0"/>
<line x1="642" y1="-106" x2="666" y2="238" stroke="#fff" stroke-width="3.0"/>
<line x1="666" y1="238" x2="695" y2="661" stroke="#fff" stroke-width="3.0"/>
<line x1="695" y1="661" x2="730" y2="1154" stroke="#fff" stroke-width="3.0"/>
<line x1="575" y1="-131" x2="596" y2="157" stroke="#fff" stroke-width="3.0"/>
<line x1="596" y1="157" x2="625" y2="585" stroke="#fff" stroke-width="3.0"/>
<line x1="528" y1="208" x2="549" y2="504" stroke="#fff" stroke-width="3.0"/>
<line x1="549" y1="504" x2="583" y2="989" stroke="#fff" stroke-width="3.0"/>
<line x1="358" y1="368" x2="376" y2="617" stroke="#fff" stroke-width="3.0"/>
<line x1="239" y1="-6" x2="252" y2="171" stroke="#fff" stroke-width="3.0"/>
<line x1="88" y1="-439" x2="119" y2="1" stroke="#fff" stroke-width="3.0"/>
<line x1="119" y1="1" x2="153" y2="487" stroke="#fff" stroke-width="3.0"/>
<line x1="24" y1="-76" x2="36" y2="95" stroke="#fff" stroke-width="3.0"/>
</g>
<g clip-path="url(#cne)">
<line x1="-77" y1="71" x2="234" y2="-80" stroke="#fff" stroke-width="3.0"/>
<line x1="-40" y1="83" x2="204" y2="-36" stroke="#fff" stroke-width="3.0"/>
<line x1="-29" y1="180" x2="256" y2="40" stroke="#fff" stroke-width="3.0"/>
<line x1="-145" y1="277" x2="267" y2="76" stroke="#fff" stroke-width="3.0"/>
<line x1="267" y1="76" x2="623" y2="-98" stroke="#fff" stroke-width="3.0"/>
<line x1="-120" y1="301" x2="219" y2="135" stroke="#fff" stroke-width="5.1"/>
<line x1="219" y1="135" x2="622" y2="-61" stroke="#fff" stroke-width="5.1"/>
<line x1="-135" y1="339" x2="310" y2="122" stroke="#fff" stroke-width="3.0"/>
<line x1="310" y1="122" x2="679" y2="-59" stroke="#fff" stroke-width="3.0"/>
<line x1="-127" y1="364" x2="345" y2="134" stroke="#fff" stroke-width="3.0"/>
<line x1="-111" y1="412" x2="9" y2="353" stroke="#fff" stroke-width="3.0"/>
<line x1="9" y1="353" x2="173" y2="273" stroke="#fff" stroke-width="3.0"/>
<line x1="173" y1="273" x2="338" y2="193" stroke="#fff" stroke-width="3.0"/>
<line x1="338" y1="193" x2="593" y2="69" stroke="#fff" stroke-width="3.0"/>
<line x1="593" y1="69" x2="784" y2="-25" stroke="#fff" stroke-width="3.0"/>
<line x1="-260" y1="518" x2="152" y2="317" stroke="#fff" stroke-width="3.0"/>
<line x1="152" y1="317" x2="511" y2="141" stroke="#fff" stroke-width="3.0"/>
<line x1="511" y1="141" x2="681" y2="59" stroke="#fff" stroke-width="3.0"/>
<line x1="-43" y1="456" x2="412" y2="234" stroke="#fff" stroke-width="3.0"/>
<line x1="412" y1="234" x2="775" y2="57" stroke="#fff" stroke-width="3.0"/>
<line x1="775" y1="57" x2="1129" y2="-116" stroke="#fff" stroke-width="3.0"/>
<line x1="-205" y1="586" x2="161" y2="407" stroke="#fff" stroke-width="3.0"/>
<line x1="161" y1="407" x2="304" y2="337" stroke="#fff" stroke-width="3.0"/>
<line x1="304" y1="337" x2="424" y2="279" stroke="#fff" stroke-width="3.0"/>
<line x1="424" y1="279" x2="576" y2="205" stroke="#fff" stroke-width="3.0"/>
<line x1="576" y1="205" x2="695" y2="147" stroke="#fff" stroke-width="3.0"/>
<line x1="695" y1="147" x2="1160" y2="-80" stroke="#fff" stroke-width="3.0"/>
<line x1="-167" y1="619" x2="122" y2="478" stroke="#fff" stroke-width="5.1"/>
<line x1="122" y1="478" x2="281" y2="401" stroke="#fff" stroke-width="5.1"/>
<line x1="281" y1="401" x2="462" y2="312" stroke="#fff" stroke-width="5.1"/>
<line x1="462" y1="312" x2="875" y2="111" stroke="#fff" stroke-width="5.1"/>
<line x1="875" y1="111" x2="1341" y2="-116" stroke="#fff" stroke-width="5.1"/>
<line x1="-282" y1="728" x2="172" y2="507" stroke="#fff" stroke-width="3.0"/>
<line x1="172" y1="507" x2="603" y2="297" stroke="#fff" stroke-width="3.0"/>
<line x1="806" y1="198" x2="1054" y2="77" stroke="#fff" stroke-width="3.0"/>
<line x1="-52" y1="671" x2="240" y2="529" stroke="#fff" stroke-width="5.1"/>
<line x1="240" y1="529" x2="723" y2="293" stroke="#fff" stroke-width="5.1"/>
<line x1="723" y1="293" x2="1054" y2="131" stroke="#fff" stroke-width="5.1"/>
<line x1="1054" y1="131" x2="1407" y2="-41" stroke="#fff" stroke-width="5.1"/>
<line x1="-240" y1="805" x2="143" y2="618" stroke="#fff" stroke-width="5.1"/>
<line x1="143" y1="618" x2="317" y2="533" stroke="#fff" stroke-width="5.1"/>
<line x1="317" y1="533" x2="662" y2="365" stroke="#fff" stroke-width="5.1"/>
<line x1="662" y1="365" x2="1049" y2="176" stroke="#fff" stroke-width="5.1"/>
<line x1="1049" y1="176" x2="1199" y2="103" stroke="#fff" stroke-width="5.1"/>
<line x1="1199" y1="103" x2="1479" y2="-33" stroke="#fff" stroke-width="5.1"/>
<line x1="42" y1="722" x2="205" y2="643" stroke="#fff" stroke-width="3.0"/>
<line x1="205" y1="643" x2="490" y2="504" stroke="#fff" stroke-width="3.0"/>
<line x1="490" y1="504" x2="605" y2="447" stroke="#fff" stroke-width="3.0"/>
<line x1="1305" y1="106" x2="1789" y2="-130" stroke="#fff" stroke-width="3.0"/>
<line x1="127" y1="710" x2="441" y2="557" stroke="#fff" stroke-width="5.1"/>
<line x1="441" y1="557" x2="720" y2="421" stroke="#fff" stroke-width="5.1"/>
<line x1="1099" y1="236" x2="1488" y2="46" stroke="#fff" stroke-width="5.1"/>
<line x1="1" y1="815" x2="384" y2="628" stroke="#fff" stroke-width="5.1"/>
<line x1="384" y1="628" x2="526" y2="559" stroke="#fff" stroke-width="5.1"/>
<line x1="526" y1="559" x2="768" y2="441" stroke="#fff" stroke-width="5.1"/>
<line x1="768" y1="441" x2="945" y2="354" stroke="#fff" stroke-width="5.1"/>
<line x1="945" y1="354" x2="1137" y2="261" stroke="#fff" stroke-width="5.1"/>
<line x1="1137" y1="261" x2="1451" y2="108" stroke="#fff" stroke-width="5.1"/>
<line x1="-40" y1="881" x2="434" y2="650" stroke="#fff" stroke-width="3.0"/>
<line x1="434" y1="650" x2="703" y2="519" stroke="#fff" stroke-width="3.0"/>
<line x1="703" y1="519" x2="1186" y2="283" stroke="#fff" stroke-width="3.0"/>
<line x1="1632" y1="65" x2="1844" y2="-38" stroke="#fff" stroke-width="3.0"/>
<line x1="297" y1="759" x2="685" y2="570" stroke="#fff" stroke-width="5.1"/>
<line x1="685" y1="570" x2="980" y2="426" stroke="#fff" stroke-width="5.1"/>
<line x1="980" y1="426" x2="1425" y2="209" stroke="#fff" stroke-width="5.1"/>
<line x1="1538" y1="153" x2="1841" y2="6" stroke="#fff" stroke-width="5.1"/>
<line x1="1841" y1="6" x2="2007" y2="-75" stroke="#fff" stroke-width="5.1"/>
<line x1="428" y1="742" x2="545" y2="685" stroke="#fff" stroke-width="3.0"/>
<line x1="545" y1="685" x2="776" y2="572" stroke="#fff" stroke-width="3.0"/>
<line x1="776" y1="572" x2="1146" y2="391" stroke="#fff" stroke-width="3.0"/>
<line x1="1146" y1="391" x2="1438" y2="249" stroke="#fff" stroke-width="3.0"/>
<line x1="1438" y1="249" x2="1778" y2="83" stroke="#fff" stroke-width="3.0"/>
<line x1="399" y1="790" x2="848" y2="571" stroke="#fff" stroke-width="3.0"/>
<line x1="848" y1="571" x2="1144" y2="426" stroke="#fff" stroke-width="3.0"/>
<line x1="1144" y1="426" x2="1596" y2="206" stroke="#fff" stroke-width="3.0"/>
<line x1="1596" y1="206" x2="1840" y2="87" stroke="#fff" stroke-width="3.0"/>
<line x1="1840" y1="87" x2="2088" y2="-34" stroke="#fff" stroke-width="3.0"/>
<line x1="627" y1="718" x2="740" y2="663" stroke="#fff" stroke-width="3.0"/>
<line x1="740" y1="663" x2="1077" y2="499" stroke="#fff" stroke-width="3.0"/>
<line x1="1077" y1="499" x2="1425" y2="329" stroke="#fff" stroke-width="3.0"/>
<line x1="1425" y1="329" x2="1847" y2="123" stroke="#fff" stroke-width="3.0"/>
<line x1="1847" y1="123" x2="2149" y2="-24" stroke="#fff" stroke-width="3.0"/>
<line x1="418" y1="858" x2="892" y2="627" stroke="#fff" stroke-width="3.0"/>
<line x1="892" y1="627" x2="1100" y2="526" stroke="#fff" stroke-width="3.0"/>
<line x1="1100" y1="526" x2="1344" y2="407" stroke="#fff" stroke-width="3.0"/>
<line x1="1344" y1="407" x2="1685" y2="240" stroke="#fff" stroke-width="3.0"/>
<line x1="1685" y1="240" x2="1859" y2="155" stroke="#fff" stroke-width="3.0"/>
<line x1="483" y1="878" x2="960" y2="645" stroke="#fff" stroke-width="5.1"/>
<line x1="960" y1="645" x2="1202" y2="527" stroke="#fff" stroke-width="5.1"/>
<line x1="1202" y1="527" x2="1450" y2="406" stroke="#fff" stroke-width="5.1"/>
<line x1="1450" y1="406" x2="1799" y2="236" stroke="#fff" stroke-width="5.1"/>
<line x1="1799" y1="236" x2="1978" y2="149" stroke="#fff" stroke-width="5.1"/>
<line x1="1978" y1="149" x2="2298" y2="-7" stroke="#fff" stroke-width="5.1"/>
<line x1="1032" y1="644" x2="1354" y2="486" stroke="#fff" stroke-width="3.0"/>
<line x1="1354" y1="486" x2="1587" y2="373" stroke="#fff" stroke-width="3.0"/>
<line x1="1587" y1="373" x2="1861" y2="239" stroke="#fff" stroke-width="3.0"/>
<line x1="612" y1="885" x2="1046" y2="674" stroke="#fff" stroke-width="3.0"/>
<line x1="1046" y1="674" x2="1510" y2="448" stroke="#fff" stroke-width="3.0"/>
<line x1="1510" y1="448" x2="1693" y2="358" stroke="#fff" stroke-width="3.0"/>
<line x1="1693" y1="358" x2="1908" y2="254" stroke="#fff" stroke-width="3.0"/>
<line x1="1386" y1="549" x2="1518" y2="484" stroke="#fff" stroke-width="3.0"/>
<line x1="1801" y1="346" x2="1989" y2="254" stroke="#fff" stroke-width="3.0"/>
<line x1="1989" y1="254" x2="2462" y2="24" stroke="#fff" stroke-width="3.0"/>
<line x1="886" y1="821" x2="1370" y2="585" stroke="#fff" stroke-width="3.0"/>
<line x1="1370" y1="585" x2="1822" y2="365" stroke="#fff" stroke-width="3.0"/>
<line x1="1822" y1="365" x2="2165" y2="197" stroke="#fff" stroke-width="3.0"/>
<line x1="1231" y1="682" x2="1405" y2="597" stroke="#fff" stroke-width="3.0"/>
<line x1="1405" y1="597" x2="1621" y2="492" stroke="#fff" stroke-width="3.0"/>
<line x1="1789" y1="410" x2="2198" y2="210" stroke="#fff" stroke-width="3.0"/>
<line x1="1237" y1="710" x2="1470" y2="596" stroke="#fff" stroke-width="3.0"/>
<line x1="1837" y1="417" x2="1972" y2="351" stroke="#fff" stroke-width="3.0"/>
<line x1="1972" y1="351" x2="2158" y2="261" stroke="#fff" stroke-width="3.0"/>
<line x1="1189" y1="782" x2="1440" y2="660" stroke="#fff" stroke-width="3.0"/>
<line x1="1440" y1="660" x2="1637" y2="564" stroke="#fff" stroke-width="3.0"/>
<line x1="1637" y1="564" x2="1986" y2="394" stroke="#fff" stroke-width="3.0"/>
<line x1="1986" y1="394" x2="2137" y2="320" stroke="#fff" stroke-width="3.0"/>
<line x1="1352" y1="732" x2="1548" y2="636" stroke="#fff" stroke-width="3.0"/>
<line x1="1548" y1="636" x2="1977" y2="427" stroke="#fff" stroke-width="3.0"/>
<line x1="1977" y1="427" x2="2408" y2="217" stroke="#fff" stroke-width="3.0"/>
<line x1="1593" y1="644" x2="1710" y2="587" stroke="#fff" stroke-width="3.0"/>
<line x1="1710" y1="587" x2="2066" y2="413" stroke="#fff" stroke-width="3.0"/>
<line x1="1601" y1="696" x2="2073" y2="466" stroke="#fff" stroke-width="3.0"/>
<line x1="1523" y1="786" x2="1888" y2="608" stroke="#fff" stroke-width="3.0"/>
<line x1="1888" y1="608" x2="2116" y2="497" stroke="#fff" stroke-width="3.0"/>
<line x1="1630" y1="769" x2="2102" y2="539" stroke="#fff" stroke-width="3.0"/>
<line x1="1584" y1="833" x2="1900" y2="679" stroke="#fff" stroke-width="3.0"/>
<line x1="1869" y1="-170" x2="2029" y2="131" stroke="#fff" stroke-width="3.0"/>
<line x1="2029" y1="131" x2="2229" y2="508" stroke="#fff" stroke-width="3.0"/>
<line x1="1812" y1="-173" x2="1961" y2="109" stroke="#fff" stroke-width="3.0"/>
<line x1="1961" y1="109" x2="2030" y2="237" stroke="#fff" stroke-width="3.0"/>
<line x1="2030" y1="237" x2="2214" y2="583" stroke="#fff" stroke-width="3.0"/>
<line x1="1750" y1="-114" x2="1884" y2="137" stroke="#fff" stroke-width="3.0"/>
<line x1="1884" y1="137" x2="1961" y2="282" stroke="#fff" stroke-width="3.0"/>
<line x1="1796" y1="51" x2="1857" y2="165" stroke="#fff" stroke-width="3.0"/>
<line x1="1614" y1="-151" x2="1715" y2="39" stroke="#fff" stroke-width="3.0"/>
<line x1="1904" y1="393" x2="2011" y2="595" stroke="#fff" stroke-width="3.0"/>
<line x1="2011" y1="595" x2="2256" y2="1056" stroke="#fff" stroke-width="3.0"/>
<line x1="1515" y1="-193" x2="1751" y2="251" stroke="#fff" stroke-width="3.0"/>
<line x1="1751" y1="251" x2="1955" y2="635" stroke="#fff" stroke-width="3.0"/>
<line x1="1955" y1="635" x2="2047" y2="807" stroke="#fff" stroke-width="3.0"/>
<line x1="1548" y1="17" x2="1796" y2="483" stroke="#fff" stroke-width="3.0"/>
<line x1="1796" y1="483" x2="1956" y2="784" stroke="#fff" stroke-width="3.0"/>
<line x1="1593" y1="236" x2="1650" y2="344" stroke="#fff" stroke-width="3.0"/>
<line x1="1650" y1="344" x2="1740" y2="514" stroke="#fff" stroke-width="3.0"/>
<line x1="1740" y1="514" x2="1940" y2="889" stroke="#fff" stroke-width="3.0"/>
<line x1="1380" y1="-49" x2="1526" y2="225" stroke="#fff" stroke-width="3.0"/>
<line x1="1526" y1="225" x2="1676" y2="508" stroke="#fff" stroke-width="3.0"/>
<line x1="1676" y1="508" x2="1870" y2="873" stroke="#fff" stroke-width="3.0"/>
<line x1="1131" y1="-402" x2="1362" y2="32" stroke="#fff" stroke-width="3.0"/>
<line x1="1362" y1="32" x2="1461" y2="219" stroke="#fff" stroke-width="3.0"/>
<line x1="1461" y1="219" x2="1596" y2="473" stroke="#fff" stroke-width="3.0"/>
<line x1="1596" y1="473" x2="1848" y2="946" stroke="#fff" stroke-width="3.0"/>
<line x1="1387" y1="192" x2="1526" y2="454" stroke="#fff" stroke-width="3.0"/>
<line x1="1435" y1="361" x2="1553" y2="583" stroke="#fff" stroke-width="5.1"/>
<line x1="1553" y1="583" x2="1759" y2="971" stroke="#fff" stroke-width="5.1"/>
<line x1="1096" y1="-178" x2="1230" y2="73" stroke="#fff" stroke-width="5.1"/>
<line x1="1230" y1="73" x2="1422" y2="434" stroke="#fff" stroke-width="5.1"/>
<line x1="1422" y1="434" x2="1545" y2="668" stroke="#fff" stroke-width="5.1"/>
<line x1="1545" y1="668" x2="1741" y2="1036" stroke="#fff" stroke-width="5.1"/>
<line x1="951" y1="-374" x2="1199" y2="93" stroke="#fff" stroke-width="5.1"/>
<line x1="1199" y1="93" x2="1304" y2="289" stroke="#fff" stroke-width="5.1"/>
<line x1="1304" y1="289" x2="1421" y2="510" stroke="#fff" stroke-width="5.1"/>
<line x1="1421" y1="510" x2="1478" y2="616" stroke="#fff" stroke-width="5.1"/>
<line x1="1478" y1="616" x2="1628" y2="898" stroke="#fff" stroke-width="5.1"/>
<line x1="1157" y1="92" x2="1356" y2="466" stroke="#fff" stroke-width="3.0"/>
<line x1="1356" y1="466" x2="1421" y2="589" stroke="#fff" stroke-width="3.0"/>
<line x1="1421" y1="589" x2="1653" y2="1025" stroke="#fff" stroke-width="3.0"/>
<line x1="979" y1="-160" x2="1145" y2="153" stroke="#fff" stroke-width="3.0"/>
<line x1="1145" y1="153" x2="1325" y2="491" stroke="#fff" stroke-width="3.0"/>
<line x1="953" y1="-97" x2="1104" y2="187" stroke="#fff" stroke-width="3.0"/>
<line x1="1104" y1="187" x2="1312" y2="577" stroke="#fff" stroke-width="3.0"/>
<line x1="876" y1="-126" x2="1125" y2="342" stroke="#fff" stroke-width="5.1"/>
<line x1="1125" y1="342" x2="1185" y2="455" stroke="#fff" stroke-width="5.1"/>
<line x1="1185" y1="455" x2="1403" y2="865" stroke="#fff" stroke-width="5.1"/>
<line x1="886" y1="-20" x2="943" y2="87" stroke="#fff" stroke-width="3.0"/>
<line x1="943" y1="87" x2="1088" y2="360" stroke="#fff" stroke-width="3.0"/>
<line x1="1088" y1="360" x2="1172" y2="518" stroke="#fff" stroke-width="3.0"/>
<line x1="1172" y1="518" x2="1291" y2="742" stroke="#fff" stroke-width="3.0"/>
<line x1="726" y1="-177" x2="838" y2="35" stroke="#fff" stroke-width="3.0"/>
<line x1="1101" y1="529" x2="1231" y2="773" stroke="#fff" stroke-width="3.0"/>
<line x1="690" y1="-100" x2="839" y2="181" stroke="#fff" stroke-width="3.0"/>
<line x1="839" y1="181" x2="954" y2="397" stroke="#fff" stroke-width="3.0"/>
<line x1="652" y1="-86" x2="821" y2="232" stroke="#fff" stroke-width="5.1"/>
<line x1="821" y1="232" x2="1025" y2="616" stroke="#fff" stroke-width="5.1"/>
<line x1="1025" y1="616" x2="1163" y2="875" stroke="#fff" stroke-width="5.1"/>
<line x1="597" y1="-78" x2="660" y2="40" stroke="#fff" stroke-width="3.0"/>
<line x1="660" y1="40" x2="893" y2="478" stroke="#fff" stroke-width="3.0"/>
<line x1="465" y1="-178" x2="568" y2="14" stroke="#fff" stroke-width="3.0"/>
<line x1="568" y1="14" x2="751" y2="359" stroke="#fff" stroke-width="3.0"/>
<line x1="833" y1="513" x2="1015" y2="855" stroke="#fff" stroke-width="3.0"/>
<line x1="600" y1="193" x2="754" y2="484" stroke="#fff" stroke-width="5.1"/>
<line x1="326" y1="-197" x2="426" y2="-9" stroke="#fff" stroke-width="3.0"/>
<line x1="426" y1="-9" x2="540" y2="206" stroke="#fff" stroke-width="3.0"/>
<line x1="694" y1="496" x2="795" y2="685" stroke="#fff" stroke-width="3.0"/>
<line x1="795" y1="685" x2="982" y2="1037" stroke="#fff" stroke-width="3.0"/>
<line x1="430" y1="75" x2="617" y2="427" stroke="#fff" stroke-width="3.0"/>
<line x1="617" y1="427" x2="747" y2="672" stroke="#fff" stroke-width="3.0"/>
<line x1="267" y1="-85" x2="404" y2="173" stroke="#fff" stroke-width="3.0"/>
<line x1="366" y1="200" x2="468" y2="392" stroke="#fff" stroke-width="3.0"/>
<line x1="468" y1="392" x2="713" y2="853" stroke="#fff" stroke-width="3.0"/>
<line x1="227" y1="72" x2="290" y2="191" stroke="#fff" stroke-width="3.0"/>
<line x1="290" y1="191" x2="410" y2="417" stroke="#fff" stroke-width="3.0"/>
<line x1="410" y1="417" x2="641" y2="851" stroke="#fff" stroke-width="3.0"/>
<line x1="56" y1="-158" x2="224" y2="158" stroke="#fff" stroke-width="3.0"/>
<line x1="-24" y1="-174" x2="225" y2="293" stroke="#fff" stroke-width="3.0"/>
<line x1="225" y1="293" x2="464" y2="744" stroke="#fff" stroke-width="3.0"/>
<line x1="1" y1="-9" x2="214" y2="392" stroke="#fff" stroke-width="3.0"/>
<line x1="283" y1="521" x2="417" y2="774" stroke="#fff" stroke-width="3.0"/>
<line x1="-141" y1="-181" x2="-1" y2="82" stroke="#fff" stroke-width="3.0"/>
<line x1="-1" y1="82" x2="135" y2="339" stroke="#fff" stroke-width="3.0"/>
<line x1="282" y1="616" x2="341" y2="727" stroke="#fff" stroke-width="3.0"/>
<line x1="-145" y1="-75" x2="94" y2="374" stroke="#fff" stroke-width="3.0"/>
<line x1="94" y1="374" x2="329" y2="815" stroke="#fff" stroke-width="3.0"/>
<line x1="46" y1="420" x2="221" y2="749" stroke="#fff" stroke-width="3.0"/>
<line x1="137" y1="665" x2="338" y2="1043" stroke="#fff" stroke-width="3.0"/>
<line x1="-31" y1="576" x2="140" y2="897" stroke="#fff" stroke-width="3.0"/>
<line x1="1776" y1="-118" x2="2003" y2="13" stroke="#fff" stroke-width="3.0"/>
<line x1="2003" y1="13" x2="2288" y2="177" stroke="#fff" stroke-width="3.0"/>
<line x1="1864" y1="73" x2="2161" y2="244" stroke="#fff" stroke-width="3.0"/>
<line x1="1106" y1="-44" x2="1370" y2="108" stroke="#fff" stroke-width="5.1"/>
<line x1="1370" y1="108" x2="1734" y2="319" stroke="#fff" stroke-width="5.1"/>
<line x1="959" y1="-40" x2="1334" y2="176" stroke="#fff" stroke-width="3.0"/>
<line x1="1334" y1="176" x2="1440" y2="238" stroke="#fff" stroke-width="3.0"/>
<line x1="1440" y1="238" x2="1875" y2="489" stroke="#fff" stroke-width="3.0"/>
<line x1="908" y1="73" x2="1146" y2="211" stroke="#fff" stroke-width="3.0"/>
<line x1="1558" y1="449" x2="1768" y2="570" stroke="#fff" stroke-width="3.0"/>
<line x1="682" y1="79" x2="829" y2="163" stroke="#fff" stroke-width="3.0"/>
<line x1="1033" y1="281" x2="1429" y2="510" stroke="#fff" stroke-width="3.0"/>
<line x1="1429" y1="510" x2="1634" y2="628" stroke="#fff" stroke-width="3.0"/>
<line x1="84" y1="-121" x2="329" y2="20" stroke="#fff" stroke-width="3.0"/>
<line x1="329" y1="20" x2="717" y2="244" stroke="#fff" stroke-width="3.0"/>
<line x1="717" y1="244" x2="1155" y2="497" stroke="#fff" stroke-width="3.0"/>
<line x1="1155" y1="497" x2="1309" y2="586" stroke="#fff" stroke-width="3.0"/>
<line x1="-322" y1="-249" x2="117" y2="4" stroke="#fff" stroke-width="3.0"/>
<line x1="458" y1="202" x2="864" y2="436" stroke="#fff" stroke-width="3.0"/>
<line x1="864" y1="436" x2="1231" y2="648" stroke="#fff" stroke-width="3.0"/>
<line x1="79" y1="94" x2="385" y2="271" stroke="#fff" stroke-width="5.1"/>
<line x1="385" y1="271" x2="789" y2="504" stroke="#fff" stroke-width="5.1"/>
<line x1="789" y1="504" x2="1012" y2="633" stroke="#fff" stroke-width="5.1"/>
<line x1="1012" y1="633" x2="1384" y2="847" stroke="#fff" stroke-width="5.1"/>
<line x1="-104" y1="136" x2="340" y2="393" stroke="#fff" stroke-width="3.0"/>
<line x1="340" y1="393" x2="770" y2="641" stroke="#fff" stroke-width="3.0"/>
<line x1="770" y1="641" x2="1126" y2="846" stroke="#fff" stroke-width="3.0"/>
<line x1="-97" y1="235" x2="86" y2="341" stroke="#fff" stroke-width="3.0"/>
<line x1="86" y1="341" x2="469" y2="562" stroke="#fff" stroke-width="3.0"/>
<line x1="120" y1="480" x2="443" y2="666" stroke="#fff" stroke-width="5.1"/>
<line x1="-193" y1="524" x2="77" y2="680" stroke="#fff" stroke-width="3.0"/>
<line x1="77" y1="680" x2="320" y2="821" stroke="#fff" stroke-width="3.0"/>
</g>
<g clip-path="url(#ce)">
<line x1="-73" y1="13" x2="119" y2="3" stroke="#fff" stroke-width="5.1"/>
<line x1="119" y1="3" x2="329" y2="-8" stroke="#fff" stroke-width="5.1"/>
<line x1="329" y1="-8" x2="797" y2="-32" stroke="#fff" stroke-width="5.1"/>
<line x1="-258" y1="74" x2="91" y2="55" stroke="#fff" stroke-width="5.1"/>
<line x1="91" y1="55" x2="592" y2="29" stroke="#fff" stroke-width="5.1"/>
<line x1="592" y1="29" x2="1082" y2="3" stroke="#fff" stroke-width="5.1"/>
<line x1="1082" y1="3" x2="1415" y2="-14" stroke="#fff" stroke-width="5.1"/>
<line x1="-267" y1="123" x2="119" y2="103" stroke="#fff" stroke-width="5.1"/>
<line x1="119" y1="103" x2="388" y2="89" stroke="#fff" stroke-width="5.1"/>
<line x1="388" y1="89" x2="642" y2="75" stroke="#fff" stroke-width="5.1"/>
<line x1="642" y1="75" x2="1141" y2="49" stroke="#fff" stroke-width="5.1"/>
<line x1="1141" y1="49" x2="1287" y2="42" stroke="#fff" stroke-width="5.1"/>
<line x1="1287" y1="42" x2="1728" y2="18" stroke="#fff" stroke-width="5.1"/>
<line x1="1728" y1="18" x2="1947" y2="7" stroke="#fff" stroke-width="5.1"/>
<line x1="-76" y1="144" x2="216" y2="129" stroke="#fff" stroke-width="3.0"/>
<line x1="216" y1="129" x2="596" y2="109" stroke="#fff" stroke-width="3.0"/>
<line x1="596" y1="109" x2="839" y2="96" stroke="#fff" stroke-width="3.0"/>
<line x1="839" y1="96" x2="1145" y2="80" stroke="#fff" stroke-width="3.0"/>
<line x1="1145" y1="80" x2="1425" y2="65" stroke="#fff" stroke-width="3.0"/>
<line x1="1683" y1="52" x2="1822" y2="45" stroke="#fff" stroke-width="3.0"/>
<line x1="-124" y1="194" x2="101" y2="183" stroke="#fff" stroke-width="3.0"/>
<line x1="101" y1="183" x2="272" y2="174" stroke="#fff" stroke-width="3.0"/>
<line x1="272" y1="174" x2="716" y2="150" stroke="#fff" stroke-width="3.0"/>
<line x1="716" y1="150" x2="1250" y2="122" stroke="#fff" stroke-width="3.0"/>
<line x1="1250" y1="122" x2="1471" y2="111" stroke="#fff" stroke-width="3.0"/>
<line x1="1471" y1="111" x2="1607" y2="104" stroke="#fff" stroke-width="3.0"/>
<line x1="1607" y1="104" x2="1831" y2="92" stroke="#fff" stroke-width="3.0"/>
<line x1="-525" y1="265" x2="10" y2="237" stroke="#fff" stroke-width="3.0"/>
<line x1="10" y1="237" x2="508" y2="211" stroke="#fff" stroke-width="3.0"/>
<line x1="508" y1="211" x2="959" y2="187" stroke="#fff" stroke-width="3.0"/>
<line x1="1286" y1="170" x2="1495" y2="159" stroke="#fff" stroke-width="3.0"/>
<line x1="1495" y1="159" x2="1992" y2="133" stroke="#fff" stroke-width="3.0"/>
<line x1="281" y1="258" x2="808" y2="230" stroke="#fff" stroke-width="3.0"/>
<line x1="1209" y1="209" x2="1705" y2="183" stroke="#fff" stroke-width="3.0"/>
<line x1="1705" y1="183" x2="2231" y2="156" stroke="#fff" stroke-width="3.0"/>
<line x1="-244" y1="313" x2="243" y2="288" stroke="#fff" stroke-width="5.1"/>
<line x1="243" y1="288" x2="702" y2="264" stroke="#fff" stroke-width="5.1"/>
<line x1="702" y1="264" x2="1191" y2="238" stroke="#fff" stroke-width="5.1"/>
<line x1="1191" y1="238" x2="1679" y2="213" stroke="#fff" stroke-width="5.1"/>
<line x1="1679" y1="213" x2="2080" y2="192" stroke="#fff" stroke-width="5.1"/>
<line x1="-301" y1="367" x2="141" y2="344" stroke="#fff" stroke-width="3.0"/>
<line x1="141" y1="344" x2="265" y2="338" stroke="#fff" stroke-width="3.0"/>
<line x1="732" y1="313" x2="1080" y2="295" stroke="#fff" stroke-width="3.0"/>
<line x1="1080" y1="295" x2="1530" y2="271" stroke="#fff" stroke-width="3.0"/>
<line x1="1530" y1="271" x2="1748" y2="260" stroke="#fff" stroke-width="3.0"/>
<line x1="-50" y1="383" x2="197" y2="371" stroke="#fff" stroke-width="3.0"/>
<line x1="197" y1="371" x2="494" y2="355" stroke="#fff" stroke-width="3.0"/>
<line x1="494" y1="355" x2="684" y2="345" stroke="#fff" stroke-width="3.0"/>
<line x1="684" y1="345" x2="878" y2="335" stroke="#fff" stroke-width="3.0"/>
<line x1="878" y1="335" x2="1205" y2="318" stroke="#fff" stroke-width="3.0"/>
<line x1="1205" y1="318" x2="1552" y2="299" stroke="#fff" stroke-width="3.0"/>
<line x1="-103" y1="421" x2="300" y2="400" stroke="#fff" stroke-width="3.0"/>
<line x1="300" y1="400" x2="551" y2="387" stroke="#fff" stroke-width="3.0"/>
<line x1="551" y1="387" x2="867" y2="370" stroke="#fff" stroke-width="3.0"/>
<line x1="867" y1="370" x2="1115" y2="357" stroke="#fff" stroke-width="3.0"/>
<line x1="1115" y1="357" x2="1565" y2="334" stroke="#fff" stroke-width="3.0"/>
<line x1="1565" y1="334" x2="1870" y2="318" stroke="#fff" stroke-width="3.0"/>
<line x1="-264" y1="477" x2="97" y2="458" stroke="#fff" stroke-width="3.0"/>
<line x1="478" y1="438" x2="766" y2="423" stroke="#fff" stroke-width="3.0"/>
<line x1="766" y1="423" x2="961" y2="413" stroke="#fff" stroke-width="3.0"/>
<line x1="961" y1="413" x2="1218" y2="399" stroke="#fff" stroke-width="3.0"/>
<line x1="1348" y1="393" x2="1866" y2="365" stroke="#fff" stroke-width="3.0"/>
<line x1="-87" y1="516" x2="82" y2="507" stroke="#fff" stroke-width="3.0"/>
<line x1="82" y1="507" x2="485" y2="486" stroke="#fff" stroke-width="3.0"/>
<line x1="485" y1="486" x2="864" y2="466" stroke="#fff" stroke-width="3.0"/>
<line x1="864" y1="466" x2="1111" y2="454" stroke="#fff" stroke-width="3.0"/>
<line x1="1111" y1="454" x2="1401" y2="438" stroke="#fff" stroke-width="3.0"/>
<line x1="1401" y1="438" x2="1897" y2="412" stroke="#fff" stroke-width="3.0"/>
<line x1="68" y1="543" x2="265" y2="533" stroke="#fff" stroke-width="3.0"/>
<line x1="265" y1="533" x2="676" y2="511" stroke="#fff" stroke-width="3.0"/>
<line x1="676" y1="511" x2="949" y2="497" stroke="#fff" stroke-width="3.0"/>
<line x1="949" y1="497" x2="1330" y2="477" stroke="#fff" stroke-width="3.0"/>
<line x1="1330" y1="477" x2="1478" y2="469" stroke="#fff" stroke-width="3.0"/>
<line x1="1478" y1="469" x2="2012" y2="441" stroke="#fff" stroke-width="3.0"/>
<line x1="-285" y1="604" x2="120" y2="583" stroke="#fff" stroke-width="3.0"/>
<line x1="120" y1="583" x2="642" y2="556" stroke="#fff" stroke-width="3.0"/>
<line x1="642" y1="556" x2="982" y2="538" stroke="#fff" stroke-width="3.0"/>
<line x1="1142" y1="530" x2="1395" y2="516" stroke="#fff" stroke-width="3.0"/>
<line x1="1395" y1="516" x2="1540" y2="509" stroke="#fff" stroke-width="3.0"/>
<line x1="1540" y1="509" x2="1781" y2="496" stroke="#fff" stroke-width="3.0"/>
<line x1="1781" y1="496" x2="2196" y2="474" stroke="#fff" stroke-width="3.0"/>
<line x1="-167" y1="643" x2="307" y2="618" stroke="#fff" stroke-width="3.0"/>
<line x1="307" y1="618" x2="455" y2="610" stroke="#fff" stroke-width="3.0"/>
<line x1="455" y1="610" x2="942" y2="585" stroke="#fff" stroke-width="3.0"/>
<line x1="942" y1="585" x2="1226" y2="570" stroke="#fff" stroke-width="3.0"/>
<line x1="1226" y1="570" x2="1707" y2="544" stroke="#fff" stroke-width="3.0"/>
<line x1="1707" y1="544" x2="1989" y2="530" stroke="#fff" stroke-width="3.0"/>
<line x1="-241" y1="673" x2="297" y2="645" stroke="#fff" stroke-width="3.0"/>
<line x1="297" y1="645" x2="803" y2="619" stroke="#fff" stroke-width="3.0"/>
<line x1="803" y1="619" x2="1082" y2="604" stroke="#fff" stroke-width="3.0"/>
<line x1="1082" y1="604" x2="1551" y2="579" stroke="#fff" stroke-width="3.0"/>
<line x1="1551" y1="579" x2="1716" y2="571" stroke="#fff" stroke-width="3.0"/>
<line x1="1716" y1="571" x2="2218" y2="544" stroke="#fff" stroke-width="3.0"/>
<line x1="-276" y1="719" x2="106" y2="699" stroke="#fff" stroke-width="3.0"/>
<line x1="106" y1="699" x2="576" y2="675" stroke="#fff" stroke-width="3.0"/>
<line x1="576" y1="675" x2="1070" y2="649" stroke="#fff" stroke-width="3.0"/>
<line x1="1070" y1="649" x2="1466" y2="628" stroke="#fff" stroke-width="3.0"/>
<line x1="1466" y1="628" x2="1840" y2="608" stroke="#fff" stroke-width="3.0"/>
<line x1="1023" y1="705" x2="1497" y2="680" stroke="#fff" stroke-width="3.0"/>
<line x1="1743" y1="714" x2="2254" y2="687" stroke="#fff" stroke-width="5.1"/>
<line x1="1958" y1="-439" x2="2001" y2="57" stroke="#fff" stroke-width="3.0"/>
<line x1="2001" y1="57" x2="2029" y2="373" stroke="#fff" stroke-width="3.0"/>
<line x1="2029" y1="373" x2="2059" y2="720" stroke="#fff" stroke-width="3.0"/>
<line x1="1921" y1="-313" x2="1957" y2="95" stroke="#fff" stroke-width="5.1"/>
<line x1="1957" y1="95" x2="2000" y2="589" stroke="#fff" stroke-width="5.1"/>
<line x1="2000" y1="589" x2="2024" y2="859" stroke="#fff" stroke-width="5.1"/>
<line x1="1877" y1="-204" x2="1901" y2="69" stroke="#fff" stroke-width="3.0"/>
<line x1="1912" y1="192" x2="1929" y2="388" stroke="#fff" stroke-width="3.0"/>
<line x1="1929" y1="388" x2="1946" y2="589" stroke="#fff" stroke-width="3.0"/>
<line x1="1946" y1="589" x2="1991" y2="1098" stroke="#fff" stroke-width="3.0"/>
<line x1="1843" y1="-225" x2="1865" y2="27" stroke="#fff" stroke-width="3.0"/>
<line x1="1865" y1="27" x2="1878" y2="180" stroke="#fff" stroke-width="3.0"/>
<line x1="1878" y1="180" x2="1914" y2="588" stroke="#fff" stroke-width="3.0"/>
<line x1="1815" y1="-50" x2="1837" y2="193" stroke="#fff" stroke-width="3.0"/>
<line x1="1837" y1="193" x2="1884" y2="731" stroke="#fff" stroke-width="3.0"/>
<line x1="1760" y1="-217" x2="1783" y2="54" stroke="#fff" stroke-width="5.1"/>
<line x1="1783" y1="54" x2="1822" y2="497" stroke="#fff" stroke-width="5.1"/>
<line x1="1822" y1="497" x2="1857" y2="895" stroke="#fff" stroke-width="5.1"/>
<line x1="1720" y1="-235" x2="1758" y2="193" stroke="#fff" stroke-width="3.0"/>
<line x1="1758" y1="193" x2="1781" y2="459" stroke="#fff" stroke-width="3.0"/>
<line x1="1781" y1="459" x2="1823" y2="942" stroke="#fff" stroke-width="3.0"/>
<line x1="1694" y1="-150" x2="1729" y2="248" stroke="#fff" stroke-width="3.0"/>
<line x1="1729" y1="248" x2="1762" y2="629" stroke="#fff" stroke-width="3.0"/>
<line x1="1762" y1="629" x2="1796" y2="1015" stroke="#fff" stroke-width="3.0"/>
<line x1="1649" y1="-117" x2="1659" y2="3" stroke="#fff" stroke-width="5.1"/>
<line x1="1659" y1="3" x2="1680" y2="239" stroke="#fff" stroke-width="5.1"/>
<line x1="1680" y1="239" x2="1694" y2="407" stroke="#fff" stroke-width="5.1"/>
<line x1="1578" y1="-310" x2="1610" y2="64" stroke="#fff" stroke-width="3.0"/>
<line x1="1654" y1="558" x2="1668" y2="723" stroke="#fff" stroke-width="3.0"/>
<line x1="1524" y1="-512" x2="1571" y2="18" stroke="#fff" stroke-width="3.0"/>
<line x1="1571" y1="18" x2="1596" y2="311" stroke="#fff" stroke-width="3.0"/>
<line x1="1596" y1="311" x2="1643" y2="842" stroke="#fff" stroke-width="3.0"/>
<line x1="1531" y1="-107" x2="1565" y2="282" stroke="#fff" stroke-width="3.0"/>
<line x1="1565" y1="282" x2="1602" y2="713" stroke="#fff" stroke-width="3.0"/>
<line x1="1485" y1="-132" x2="1522" y2="284" stroke="#fff" stroke-width="3.0"/>
<line x1="1522" y1="284" x2="1550" y2="605" stroke="#fff" stroke-width="3.0"/>
<line x1="1550" y1="605" x2="1574" y2="886" stroke="#fff" stroke-width="3.0"/>
<line x1="1456" y1="112" x2="1475" y2="327" stroke="#fff" stroke-width="3.0"/>
<line x1="1475" y1="327" x2="1515" y2="778" stroke="#fff" stroke-width="3.0"/>
<line x1="1391" y1="-10" x2="1405" y2="155" stroke="#fff" stroke-width="3.0"/>
<line x1="1419" y1="305" x2="1450" y2="665" stroke="#fff" stroke-width="3.0"/>
<line x1="1450" y1="665" x2="1493" y2="1152" stroke="#fff" stroke-width="3.0"/>
<line x1="1325" y1="-109" x2="1344" y2="109" stroke="#fff" stroke-width="3.0"/>
<line x1="1344" y1="109" x2="1381" y2="536" stroke="#fff" stroke-width="3.0"/>
<line x1="1381" y1="536" x2="1418" y2="954" stroke="#fff" stroke-width="3.0"/>
<line x1="1263" y1="-374" x2="1303" y2="88" stroke="#fff" stroke-width="3.0"/>
<line x1="1303" y1="88" x2="1337" y2="469" stroke="#fff" stroke-width="3.0"/>
<line x1="1337" y1="469" x2="1356" y2="687" stroke="#fff" stroke-width="3.0"/>
<line x1="1356" y1="687" x2="1389" y2="1064" stroke="#fff" stroke-width="3.0"/>
<line x1="1219" y1="-264" x2="1262" y2="228" stroke="#fff" stroke-width="3.0"/>
<line x1="1300" y1="665" x2="1328" y2="982" stroke="#fff" stroke-width="3.0"/>
<line x1="1169" y1="-372" x2="1205" y2="35" stroke="#fff" stroke-width="3.0"/>
<line x1="1205" y1="35" x2="1232" y2="352" stroke="#fff" stroke-width="3.0"/>
<line x1="1232" y1="352" x2="1247" y2="521" stroke="#fff" stroke-width="3.0"/>
<line x1="1247" y1="521" x2="1268" y2="763" stroke="#fff" stroke-width="3.0"/>
<line x1="1193" y1="353" x2="1205" y2="498" stroke="#fff" stroke-width="3.0"/>
<line x1="1092" y1="-135" x2="1107" y2="29" stroke="#fff" stroke-width="5.1"/>
<line x1="1107" y1="29" x2="1151" y2="535" stroke="#fff" stroke-width="5.1"/>
<line x1="1151" y1="535" x2="1193" y2="1013" stroke="#fff" stroke-width="5.1"/>
<line x1="1054" y1="11" x2="1080" y2="310" stroke="#fff" stroke-width="3.0"/>
<line x1="979" y1="-250" x2="1016" y2="174" stroke="#fff" stroke-width="3.0"/>
<line x1="1016" y1="174" x2="1036" y2="406" stroke="#fff" stroke-width="3.0"/>
<line x1="1036" y1="406" x2="1061" y2="685" stroke="#fff" stroke-width="3.0"/>
<line x1="1061" y1="685" x2="1074" y2="833" stroke="#fff" stroke-width="3.0"/>
<line x1="946" y1="-292" x2="978" y2="72" stroke="#fff" stroke-width="5.1"/>
<line x1="1015" y1="496" x2="1045" y2="837" stroke="#fff" stroke-width="5.1"/>
<line x1="914" y1="-288" x2="946" y2="81" stroke="#fff" stroke-width="3.0"/>
<line x1="946" y1="81" x2="986" y2="541" stroke="#fff" stroke-width="3.0"/>
<line x1="986" y1="541" x2="999" y2="683" stroke="#fff" stroke-width="3.0"/>
<line x1="999" y1="683" x2="1010" y2="816" stroke="#fff" stroke-width="3.0"/>
<line x1="860" y1="-310" x2="901" y2="157" stroke="#fff" stroke-width="3.0"/>
<line x1="901" y1="157" x2="913" y2="292" stroke="#fff" stroke-width="3.0"/>
<line x1="913" y1="292" x2="927" y2="453" stroke="#fff" stroke-width="3.0"/>
<line x1="927" y1="453" x2="970" y2="949" stroke="#fff" stroke-width="3.0"/>
<line x1="818" y1="-237" x2="843" y2="49" stroke="#fff" stroke-width="3.0"/>
<line x1="843" y1="49" x2="884" y2="510" stroke="#fff" stroke-width="3.0"/>
<line x1="884" y1="510" x2="920" y2="919" stroke="#fff" stroke-width="3.0"/>
<line x1="802" y1="2" x2="840" y2="436" stroke="#fff" stroke-width="5.1"/>
<line x1="840" y1="436" x2="885" y2="956" stroke="#fff" stroke-width="5.1"/>
<line x1="743" y1="-271" x2="777" y2="122" stroke="#fff" stroke-width="3.0"/>
<line x1="777" y1="122" x2="821" y2="622" stroke="#fff" stroke-width="3.0"/>
<line x1="821" y1="622" x2="845" y2="904" stroke="#fff" stroke-width="3.0"/>
<line x1="671" y1="-452" x2="712" y2="15" stroke="#fff" stroke-width="3.0"/>
<line x1="712" y1="15" x2="749" y2="439" stroke="#fff" stroke-width="3.0"/>
<line x1="749" y1="439" x2="775" y2="737" stroke="#fff" stroke-width="3.0"/>
<line x1="647" y1="-379" x2="689" y2="90" stroke="#fff" stroke-width="5.1"/>
<line x1="689" y1="90" x2="711" y2="343" stroke="#fff" stroke-width="5.1"/>
<line x1="711" y1="343" x2="745" y2="732" stroke="#fff" stroke-width="5.1"/>
<line x1="621" y1="-296" x2="655" y2="85" stroke="#fff" stroke-width="3.0"/>
<line x1="655" y1="85" x2="669" y2="248" stroke="#fff" stroke-width="3.0"/>
<line x1="669" y1="248" x2="682" y2="394" stroke="#fff" stroke-width="3.0"/>
<line x1="682" y1="394" x2="706" y2="670" stroke="#fff" stroke-width="3.0"/>
<line x1="706" y1="670" x2="741" y2="1075" stroke="#fff" stroke-width="3.0"/>
<line x1="579" y1="-323" x2="607" y2="-3" stroke="#fff" stroke-width="3.0"/>
<line x1="607" y1="-3" x2="644" y2="425" stroke="#fff" stroke-width="3.0"/>
<line x1="644" y1="425" x2="669" y2="704" stroke="#fff" stroke-width="3.0"/>
<line x1="669" y1="704" x2="697" y2="1032" stroke="#fff" stroke-width="3.0"/>
<line x1="587" y1="115" x2="625" y2="555" stroke="#fff" stroke-width="3.0"/>
<line x1="625" y1="555" x2="636" y2="682" stroke="#fff" stroke-width="3.0"/>
<line x1="636" y1="682" x2="664" y2="993" stroke="#fff" stroke-width="3.0"/>
<line x1="510" y1="-404" x2="553" y2="93" stroke="#fff" stroke-width="3.0"/>
<line x1="587" y1="478" x2="599" y2="608" stroke="#fff" stroke-width="3.0"/>
<line x1="599" y1="608" x2="624" y2="900" stroke="#fff" stroke-width="3.0"/>
<line x1="478" y1="-394" x2="512" y2="4" stroke="#fff" stroke-width="3.0"/>
<line x1="512" y1="4" x2="529" y2="195" stroke="#fff" stroke-width="3.0"/>
<line x1="529" y1="195" x2="542" y2="345" stroke="#fff" stroke-width="3.0"/>
<line x1="542" y1="345" x2="586" y2="840" stroke="#fff" stroke-width="3.0"/>
<line x1="438" y1="-436" x2="484" y2="92" stroke="#fff" stroke-width="3.0"/>
<line x1="484" y1="92" x2="498" y2="249" stroke="#fff" stroke-width="3.0"/>
<line x1="498" y1="249" x2="532" y2="638" stroke="#fff" stroke-width="3.0"/>
<line x1="532" y1="638" x2="556" y2="911" stroke="#fff" stroke-width="3.0"/>
<line x1="410" y1="-251" x2="445" y2="142" stroke="#fff" stroke-width="3.0"/>
<line x1="445" y1="142" x2="469" y2="417" stroke="#fff" stroke-width="3.0"/>
<line x1="469" y1="417" x2="505" y2="835" stroke="#fff" stroke-width="3.0"/>
<line x1="379" y1="-126" x2="397" y2="80" stroke="#fff" stroke-width="3.0"/>
<line x1="410" y1="225" x2="433" y2="488" stroke="#fff" stroke-width="3.0"/>
<line x1="433" y1="488" x2="478" y2="1012" stroke="#fff" stroke-width="3.0"/>
<line x1="359" y1="110" x2="399" y2="574" stroke="#fff" stroke-width="3.0"/>
<line x1="298" y1="-45" x2="339" y2="428" stroke="#fff" stroke-width="3.0"/>
<line x1="339" y1="428" x2="377" y2="863" stroke="#fff" stroke-width="3.0"/>
<line x1="246" y1="-247" x2="282" y2="160" stroke="#fff" stroke-width="3.0"/>
<line x1="282" y1="160" x2="313" y2="519" stroke="#fff" stroke-width="3.0"/>
<line x1="313" y1="519" x2="329" y2="699" stroke="#fff" stroke-width="3.0"/>
<line x1="329" y1="699" x2="358" y2="1026" stroke="#fff" stroke-width="3.0"/>
<line x1="174" y1="-467" x2="220" y2="53" stroke="#fff" stroke-width="3.0"/>
<line x1="220" y1="53" x2="258" y2="495" stroke="#fff" stroke-width="3.0"/>
<line x1="258" y1="495" x2="273" y2="657" stroke="#fff" stroke-width="3.0"/>
<line x1="273" y1="657" x2="314" y2="1130" stroke="#fff" stroke-width="3.0"/>
<line x1="130" y1="-500" x2="175" y2="14" stroke="#fff" stroke-width="3.0"/>
<line x1="175" y1="14" x2="218" y2="509" stroke="#fff" stroke-width="3.0"/>
<line x1="218" y1="509" x2="232" y2="672" stroke="#fff" stroke-width="3.0"/>
<line x1="114" y1="-184" x2="145" y2="166" stroke="#fff" stroke-width="5.1"/>
<line x1="145" y1="166" x2="171" y2="465" stroke="#fff" stroke-width="5.1"/>
<line x1="171" y1="465" x2="201" y2="800" stroke="#fff" stroke-width="5.1"/>
<line x1="84" y1="-159" x2="122" y2="278" stroke="#fff" stroke-width="5.1"/>
<line x1="122" y1="278" x2="137" y2="453" stroke="#fff" stroke-width="5.1"/>
<line x1="137" y1="453" x2="173" y2="864" stroke="#fff" stroke-width="5.1"/>
<line x1="54" y1="-129" x2="75" y2="108" stroke="#fff" stroke-width="3.0"/>
<line x1="75" y1="108" x2="118" y2="595" stroke="#fff" stroke-width="3.0"/>
<line x1="118" y1="595" x2="143" y2="890" stroke="#fff" stroke-width="3.0"/>
<line x1="5" y1="-106" x2="42" y2="320" stroke="#fff" stroke-width="5.1"/>
<line x1="42" y1="320" x2="79" y2="737" stroke="#fff" stroke-width="5.1"/>
<line x1="2" y1="485" x2="37" y2="879" stroke="#fff" stroke-width="5.1"/>
</g>
<line x1="0" y1="330" x2="380" y2="420" stroke="#d9dbde" stroke-width="2.5"/>
<line x1="380" y1="420" x2="700" y2="380" stroke="#d9dbde" stroke-width="2.5"/>
<line x1="0" y1="455" x2="360" y2="440" stroke="#d9dbde" stroke-width="2.5"/>
<line x1="450" y1="100" x2="620" y2="200" stroke="#d9dbde" stroke-width="2.5"/>
<line x1="620" y1="200" x2="860" y2="330" stroke="#d9dbde" stroke-width="2.5"/>
<line x1="1000" y1="460" x2="1240" y2="400" stroke="#d9dbde" stroke-width="2.5"/>
<path d="M388,0 L433,73 L470,131 L488,150" fill="none" stroke="#f2c45a" stroke-width="9.5" stroke-linejoin="round" stroke-linecap="round"/>
<path d="M388,0 L433,73 L470,131 L488,150" fill="none" stroke="#fddc7c" stroke-width="7" stroke-linejoin="round" stroke-linecap="round"/>
<path d="M488,150 L580,101 L653,64 L667,66 L694,90 L734,113 L802,156 L915,240 L949,271 L1031,325 L1093,365 L1145,387 L1175,393 L1188,426 L1212,533 L1227,625 L1233,680 L1218,686 L1133,689 L1041,700" fill="none" stroke="#f2c45a" stroke-width="9.5" stroke-linejoin="round" stroke-linecap="round"/>
<path d="M488,150 L580,101 L653,64 L667,66 L694,90 L734,113 L802,156 L915,240 L949,271 L1031,325 L1093,365 L1145,387 L1175,393 L1188,426 L1212,533 L1227,625 L1233,680 L1218,686 L1133,689 L1041,700" fill="none" stroke="#fddc7c" stroke-width="7" stroke-linejoin="round" stroke-linecap="round"/>
<path d="M1139,387 L1148,417 L1133,472 L1133,564 L1142,700" fill="none" stroke="#f2c45a" stroke-width="8.5" stroke-linejoin="round" stroke-linecap="round"/>
<path d="M1139,387 L1148,417 L1133,472 L1133,564 L1142,700" fill="none" stroke="#fddc7c" stroke-width="6" stroke-linejoin="round" stroke-linecap="round"/>
<path d="M488,150 L449,180 L427,220 L397,305 L380,350 L305,545 L269,631 L265,700" fill="none" stroke="#f2c45a" stroke-width="9.5" stroke-linejoin="round" stroke-linecap="round"/>
<path d="M488,150 L449,180 L427,220 L397,305 L380,350 L305,545 L269,631 L265,700" fill="none" stroke="#fddc7c" stroke-width="7" stroke-linejoin="round" stroke-linecap="round"/>
<path d="M0,267 L46,279 L92,293 L119,308 L159,350 L195,387 L232,417 L265,457" fill="none" stroke="#f2c45a" stroke-width="8.5" stroke-linejoin="round" stroke-linecap="round"/>
<path d="M0,267 L46,279 L92,293 L119,308 L159,350 L195,387 L232,417 L265,457" fill="none" stroke="#fddc7c" stroke-width="6" stroke-linejoin="round" stroke-linecap="round"/>
<path d="M232,417 L259,388 L293,435 L269,457 L235,421" fill="none" stroke="#f2c45a" stroke-width="7.5" stroke-linejoin="round" stroke-linecap="round"/>
<path d="M232,417 L259,388 L293,435 L269,457 L235,421" fill="none" stroke="#fddc7c" stroke-width="5" stroke-linejoin="round" stroke-linecap="round"/>
<path d="M293,435 L314,442" fill="none" stroke="#f2c45a" stroke-width="8.5" stroke-linejoin="round" stroke-linecap="round"/>
<path d="M293,435 L314,442" fill="none" stroke="#fddc7c" stroke-width="6" stroke-linejoin="round" stroke-linecap="round"/>
<path d="M27,0 L12,37 L0,64" fill="none" stroke="#f2c45a" stroke-width="8.5" stroke-linejoin="round" stroke-linecap="round"/>
<path d="M27,0 L12,37 L0,64" fill="none" stroke="#fddc7c" stroke-width="6" stroke-linejoin="round" stroke-linecap="round"/>
<path d="M101,700 L232,635 L262,649" fill="none" stroke="#f2c45a" stroke-width="8.5" stroke-linejoin="round" stroke-linecap="round"/>
<path d="M101,700 L232,635 L262,649" fill="none" stroke="#fddc7c" stroke-width="6" stroke-linejoin="round" stroke-linecap="round"/>
<path d="M960,700 L1041,692" fill="none" stroke="#f2c45a" stroke-width="8.5" stroke-linejoin="round" stroke-linecap="round"/>
<path d="M960,700 L1041,692" fill="none" stroke="#fddc7c" stroke-width="6" stroke-linejoin="round" stroke-linecap="round"/>
<polygon points="651,0 672,10 698,20 720,31 727,45 737,61 737,67 727,81 743,75 761,77 782,81 794,98 814,108 824,116 834,128 849,142 853,159 873,161 881,169 885,177 936,212 967,224 987,240 1007,262 1022,279 1044,292 1047,301 1079,316 1142,323 1180,335 1198,362 1223,383 1254,395 1254,405 1228,410 1264,416 1264,428 1241,433 1264,438 1264,449 1223,459 1233,487 1215,499 1218,512 1238,515 1243,504 1266,494 1294,497 1309,515 1335,542 1342,581 1373,606 1378,636 1391,664 1396,700 2024,700 2024,0" fill="#aadaff"/>
<path d="M881,169 L885,177 L936,212 L967,224 L987,240 L1007,262 L1022,279 L1044,292" fill="none" stroke="#fff" stroke-width="4" stroke-linejoin="round"/>
<polygon points="1262,505 1290,500 1310,516 1335,545 1342,582 1372,607 1377,636 1350,660 1300,668 1282,640 1270,590 1255,540" fill="#b5e0b5"/>
<polygon points="1262,530 1290,525 1300,560 1290,585 1275,580" fill="#aadaff"/>
<polygon points="1278,590 1300,588 1310,630 1300,660 1285,650" fill="#aadaff"/>
<polygon points="1222,516 1232,516 1242,700 1230,700" fill="#aadaff"/>
<path d="M1437,0 L1891,416 Q1929,443 2024,478" fill="none" stroke="#8fb9f0" stroke-width="2.5" stroke-dasharray="12,8"/>
<path d="M935,212 L927,209 L896,193 L873,187 L858,177 L848,168 L845,152 L845,139 L835,127 L816,119 L807,123 L801,136 L804,152 L813,161 L816,184 L829,203 L864,237 L896,263 L911,278 L934,307 L971,332 L994,350 L1005,368 L1041,390 L1059,399 L1090,420 L1114,436 L1087,466 L1069,487 L1060,493" fill="none" stroke="#fff" stroke-width="0" />
<path d="M935,212 L927,209 L896,193 L873,187 L858,177 L848,168 L845,152 L845,139 L835,127 L816,119 L807,123 L801,136 L804,152 L813,161 L816,184 L829,203 L864,237 L896,263 L911,278 L934,307 L971,332 L994,350 L1005,368 L1041,390 L1059,399 L1090,420 L1114,436 L1087,466 L1069,487 L1060,493" fill="none" stroke="#6aa4f5" stroke-opacity=".85" stroke-width="11" stroke-linejoin="round" stroke-linecap="round"/>
<text x="0" y="20.5" font-family="Liberation Sans" font-size="26" font-weight="400" letter-spacing="0" fill="#444a52" stroke="#fff" stroke-width="5" stroke-linejoin="round" paint-order="stroke" text-anchor="start">é León</text>
<text x="0" y="49.5" font-family="Liberation Sans" font-size="26" font-weight="400" letter-spacing="0" fill="#444a52" stroke="#fff" stroke-width="5" stroke-linejoin="round" paint-order="stroke" text-anchor="start">uá</text>
<text x="506" y="27.5" font-family="Liberation Sans" font-size="29.5" font-weight="400" letter-spacing="0" fill="#3d3d4a" stroke="#fff" stroke-width="5" stroke-linejoin="round" paint-order="stroke" text-anchor="start">Vicente López</text>
<text x="461" y="61.5" font-family="Liberation Sans" font-size="26" font-weight="400" letter-spacing="0" fill="#444a52" stroke="#fff" stroke-width="5" stroke-linejoin="round" paint-order="stroke" text-anchor="start">Florida</text>
<text x="628" y="131.5" font-family="Liberation Sans" font-size="28" font-weight="700" letter-spacing="2" fill="#5b6b7d" stroke="#fff" stroke-width="5" stroke-linejoin="round" paint-order="stroke" text-anchor="start">NÚÑEZ</text>
<text x="26" y="177.5" font-family="Liberation Sans" font-size="26" font-weight="400" letter-spacing="0" fill="#444a52" stroke="#fff" stroke-width="5" stroke-linejoin="round" paint-order="stroke" text-anchor="start">Villa Ballester</text>
<text x="326" y="189.5" font-family="Liberation Sans" font-size="26" font-weight="400" letter-spacing="0" fill="#444a52" stroke="#fff" stroke-width="5" stroke-linejoin="round" paint-order="stroke" text-anchor="start">Villa Martelli</text>
<text x="645" y="303.5" font-family="Liberation Sans" font-size="27.5" font-weight="400" letter-spacing="0" fill="#188038" stroke="#fff" stroke-width="5" stroke-linejoin="round" paint-order="stroke" text-anchor="start">Bosques de Palermo</text>
<text x="0" y="337.5" font-family="Liberation Sans" font-size="26" font-weight="400" letter-spacing="0" fill="#444a52" stroke="#fff" stroke-width="5" stroke-linejoin="round" paint-order="stroke" text-anchor="start">linghurst</text>
<text x="169" y="364.5" font-family="Liberation Sans" font-size="26" font-weight="400" letter-spacing="0" fill="#444a52" stroke="#fff" stroke-width="5" stroke-linejoin="round" paint-order="stroke" text-anchor="start">San Martín</text>
<text x="0" y="404.5" font-family="Liberation Sans" font-size="26" font-weight="400" letter-spacing="0" fill="#444a52" stroke="#fff" stroke-width="5" stroke-linejoin="round" paint-order="stroke" text-anchor="start">osch</text>
<text x="494" y="406.5" font-family="Liberation Sans" font-size="27.5" font-weight="400" letter-spacing="0" fill="#188038" stroke="#fff" stroke-width="5" stroke-linejoin="round" paint-order="stroke" text-anchor="start">Cementerio de</text>
<text x="529" y="434.5" font-family="Liberation Sans" font-size="27.5" font-weight="400" letter-spacing="0" fill="#188038" stroke="#fff" stroke-width="5" stroke-linejoin="round" paint-order="stroke" text-anchor="start">la Chacarita</text>
<text x="799" y="381.5" font-family="Liberation Sans" font-size="28" font-weight="700" letter-spacing="2" fill="#5b6b7d" stroke="#fff" stroke-width="5" stroke-linejoin="round" paint-order="stroke" text-anchor="start">PALERMO</text>
<text x="1025" y="317.5" font-family="Liberation Sans" font-size="28" font-weight="400" letter-spacing="0" fill="#0e8a96" stroke="#fff" stroke-width="5" stroke-linejoin="round" paint-order="stroke" text-anchor="start">Museo Nacional</text>
<text x="1025" y="345.5" font-family="Liberation Sans" font-size="28" font-weight="400" letter-spacing="0" fill="#0e8a96" stroke="#fff" stroke-width="5" stroke-linejoin="round" paint-order="stroke" text-anchor="start">de Bellas Artes</text>
<text x="1000" y="445.5" font-family="Liberation Sans" font-size="16" font-weight="700" letter-spacing="0" fill="#5b6b7d" stroke="#fff" stroke-width="5" stroke-linejoin="round" paint-order="stroke" text-anchor="start">RECO</text>
<text x="1114" y="461.5" font-family="Liberation Sans" font-size="16" font-weight="700" letter-spacing="0" fill="#5b6b7d" stroke="#fff" stroke-width="5" stroke-linejoin="round" paint-order="stroke" text-anchor="start">RETIRO</text>
<text x="427" y="498.5" font-family="Liberation Sans" font-size="16.5" font-weight="700" letter-spacing="0" fill="#5b6b7d" stroke="#fff" stroke-width="5" stroke-linejoin="round" paint-order="stroke" text-anchor="start">AGRONOMÍA</text>
<text x="659" y="500.5" font-family="Liberation Sans" font-size="28" font-weight="700" letter-spacing="2" fill="#5b6b7d" stroke="#fff" stroke-width="5" stroke-linejoin="round" paint-order="stroke" text-anchor="start">VILLA CRESPO</text>
<text x="411" y="555.5" font-family="Liberation Sans" font-size="28" font-weight="700" letter-spacing="2" fill="#5b6b7d" stroke="#fff" stroke-width="5" stroke-linejoin="round" paint-order="stroke" text-anchor="start">VILLA DEL</text>
<text x="427" y="584.5" font-family="Liberation Sans" font-size="28" font-weight="700" letter-spacing="2" fill="#5b6b7d" stroke="#fff" stroke-width="5" stroke-linejoin="round" paint-order="stroke" text-anchor="start">PARQUE</text>
<text x="707" y="570.5" font-family="Liberation Sans" font-size="27.5" font-weight="400" letter-spacing="0" fill="#188038" stroke="#fff" stroke-width="5" stroke-linejoin="round" paint-order="stroke" text-anchor="start">Parque Centenario</text>
<text x="1016" y="564.5" font-family="Liberation Sans" font-size="26.7" font-weight="400" letter-spacing="0" fill="#4f6474" stroke="#fff" stroke-width="5" stroke-linejoin="round" paint-order="stroke" text-anchor="start">Casa Rosada</text>
<text x="29" y="605.5" font-family="Liberation Sans" font-size="25.5" font-weight="400" letter-spacing="0" fill="#444a52" stroke="#fff" stroke-width="5" stroke-linejoin="round" paint-order="stroke" text-anchor="start">Caseros</text>
<text x="705" y="651.5" font-family="Liberation Sans" font-size="28" font-weight="700" letter-spacing="2" fill="#5b6b7d" stroke="#fff" stroke-width="5" stroke-linejoin="round" paint-order="stroke" text-anchor="start">CABALLITO</text>
<text x="1039" y="631.5" font-family="Liberation Sans" font-size="28" font-weight="700" letter-spacing="2.5" fill="#5b6b7d" stroke="#fff" stroke-width="5" stroke-linejoin="round" paint-order="stroke" text-anchor="start">MONSERRAT</text>
<text x="1178" y="660.5" font-family="Liberation Sans" font-size="16.5" font-weight="700" letter-spacing="0" fill="#5b6b7d" stroke="#fff" stroke-width="5" stroke-linejoin="round" paint-order="stroke" text-anchor="start">PUERTO MADERO</text>
<g transform="translate(262,619) rotate(-67)"><text x="0" y="0" font-family="Liberation Sans" font-size="19" font-weight="700" letter-spacing="1" fill="#8a8a8a" stroke="#fff" stroke-width="4" stroke-linejoin="round" paint-order="stroke">PROVINCIA DE BUENOS AIRES</text></g>
<g transform="translate(317,554) rotate(-66)"><text x="0" y="0" font-family="Liberation Sans" font-size="19" font-weight="700" letter-spacing="1" fill="#8a8a8a" stroke="#fff" stroke-width="4" stroke-linejoin="round" paint-order="stroke">BUENOS AIRES</text></g>
<rect x="98" y="291" width="22" height="21" rx="2" fill="#5e9c3a"/><text x="109" y="308" font-family="Liberation Sans" font-size="16" font-weight="700" fill="#fff" text-anchor="middle">8</text>
<path d="M908,282 A19,19 0 1 1 946,282 C946,299.1 930,308 927,320 C924,308 908,299.1 908,282z" fill="#34a853" stroke="#fff" stroke-width="2"/>
<path d="M927,271 l6,8 h-3 l5,7 h-16 l5,-7 h-3z M925.5,286 h3 v5 h-3z" fill="#fff"/>
<path d="M680,403 A20,20 0 1 1 720,403 C720,421.0 703,430 700,442 C697,430 680,421.0 680,403z" fill="#34a853" stroke="#fff" stroke-width="2"/>
<path d="M696,390 l6,8 h-3 l5,7 h-16 l5,-7 h-3z M694.5,405 h3 v5 h-3z" fill="#fff"/><rect x="690" y="411" width="24" height="3" fill="#fff"/>
<path d="M1051,374 A19,19 0 1 1 1089,374 C1089,391.1 1073,396 1070,408 C1067,396 1051,391.1 1051,374z" fill="#12b5cb" stroke="#fff" stroke-width="2"/>
<path d="M1060,372 l10,-8 l10,8z M1061,374h18v11h-18z" fill="#fff"/><text x="1070" y="384" font-family="Liberation Sans" font-size="11" font-weight="700" fill="#12b5cb" text-anchor="middle">M</text>
<path d="M1184,544 A19,19 0 1 1 1222,544 C1222,561.1 1206,568 1203,580 C1200,568 1184,561.1 1184,544z" fill="#78909c" stroke="#fff" stroke-width="2"/>
<path d="M1192,541 l11,-8 l11,8z M1193,543h20v3h-20z M1195,547h3v8h-3z M1202,547h3v8h-3z M1209,547h3v8h-3z M1192,555h22v2h-22z" fill="#fff"/>
<path d="M909,153 A26,26 0 1 1 961,153 C961,175.1 939,192 935,212 C931,192 909,175.1 909,153z" fill="#ea4335" stroke="#fff" stroke-width="2.2"/>
<text x="935" y="163" font-family="Liberation Sans" font-size="27" fill="#000" text-anchor="middle">B</text>
<path d="M1065,412 A26,26 0 1 1 1117,412 C1117,434.1 1095,449 1091,469 C1087,449 1065,434.1 1065,412z" fill="#ea4335" stroke="#fff" stroke-width="2.2"/>
<circle cx="1091" cy="412" r="9" fill="#7a1410"/>
<path d="M1035,426 A26,26 0 1 1 1087,426 C1087,448.1 1065,464 1061,484 C1057,464 1035,448.1 1035,426z" fill="#ea4335" stroke="#fff" stroke-width="2.2"/>
<text x="1061" y="436" font-family="Liberation Sans" font-size="27" fill="#000" text-anchor="middle">A</text>
<rect x="1238" y="692" width="28" height="14" rx="4" fill="#fff" stroke="#888" stroke-width="2"/>
</svg>
<div class="a" style="left:20px;top:20px;width:346px;height:80px;background:#fff;border-radius:4px;box-shadow:0 2px 8px rgba(0,0,0,.3)"></div>
<div class="a" style="left:177px;top:20px;width:2px;height:80px;background:#ebebeb"></div>
<div class="t" style="left:54px;top:44px;font-size:35px;font-weight:700;color:#000">Mapa</div>
<div class="t" style="left:212px;top:44px;font-size:35.5px;color:#565656">Satélite</div>

<div class="a" style="left:1924px;top:20px;width:80px;height:80px;background:#fff;border-radius:4px;box-shadow:0 2px 8px rgba(0,0,0,.3)"></div>
<svg class="a" style="left:1946px;top:42px" width="36" height="36" viewBox="0 0 36 36"><path d="M0,12V0H12V4H4V12z M24,0H36V12H32V4H24z M36,24V36H24V32H32V24z M12,36H0V24H4V32H12z" fill="#666"/></svg>

<div class="a" style="left:1924px;top:346px;width:80px;height:80px;background:#fff;border-radius:4px;box-shadow:0 2px 8px rgba(0,0,0,.3)"></div>
<svg class="a" style="left:1949px;top:354px" width="32" height="64" viewBox="0 0 32 64"><circle cx="16" cy="11" r="9" fill="#fdbf2d" stroke="#777" stroke-width="1.6"/><path d="M7,22 Q16,19 25,22 L30,43 Q30,46 27,46 L24,38 L23,64 H17 L16,50 L15,64 H9 L8,38 L5,46 Q2,46 2,43z" fill="#fdbf2d" stroke="#777" stroke-width="1.6" stroke-linejoin="round"/><path d="M10,22 L16,31 L22,22z" fill="#e58a2c"/></svg>

<div class="a" style="left:1924px;top:490px;width:80px;height:162px;background:#fff;border-radius:4px;box-shadow:0 2px 8px rgba(0,0,0,.3)"></div>
<div class="a" style="left:1934px;top:570px;width:60px;height:2px;background:#e6e6e6"></div>
<svg class="a" style="left:1946px;top:512px" width="36" height="36" viewBox="0 0 36 36"><path d="M14.5,0h7v14.5H36v7H21.5V36h-7V21.5H0v-7h14.5z" fill="#666"/></svg>
<svg class="a" style="left:1946px;top:608px" width="36" height="9" viewBox="0 0 36 9"><rect width="36" height="8" fill="#666"/></svg>

<div class="a" style="left:1278px;top:672px;width:746px;height:28px;background:rgba(245,245,245,.72)"></div>
<div class="a" style="left:1504px;top:672px;width:4px;height:28px;background:rgba(170,218,255,1)"></div>
<div class="a" style="left:1747px;top:672px;width:4px;height:28px;background:rgba(170,218,255,1)"></div>
<div class="t" style="left:1289px;top:675px;font-size:20px;color:#000">Datos del mapa ©2020</div>
<div class="t" style="left:1517px;top:675px;font-size:20px;color:#000">Condiciones del Servicio</div>
<div class="t" style="left:1760px;top:675px;font-size:20px;color:#000">Informar un error en el mapa</div>

<div class="a" style="left:13px;top:649px;width:130px;height:40px;font-family:'Liberation Sans';font-size:37px;font-weight:700;line-height:40px;letter-spacing:-1.3px;white-space:nowrap;text-shadow:0 0 3px #fff,0 0 3px #fff"><span style="color:#4285f4">G</span><span style="color:#ea4335">o</span><span style="color:#fbbc05">o</span><span style="color:#4285f4">g</span><span style="color:#34a853">l</span><span style="color:#ea4335">e</span></div>

<div class="a" style="left:160px;top:646px;width:36px;height:44px;background:#2b5d8c;border:1px solid #1f4a73;border-radius:6px;color:#fff;font-size:25px;text-align:center;line-height:42px">1</div>
<div class="a" style="left:202px;top:646px;width:38px;height:44px;background:#3c8dbc;border:1px solid #367fa9;border-radius:6px;color:#fff;font-size:25px;text-align:center;line-height:42px">2</div>
<div class="a" style="left:246px;top:646px;width:36px;height:44px;background:#3c8dbc;border:1px solid #367fa9;border-radius:6px;color:#fff;font-size:25px;text-align:center;line-height:42px">3</div>

<!--MAPEND-->
</div>

<!-- BOX 4 -->
<div class="box" style="top:1876px;height:173px"></div>


<!-- BOX4 content -->
<div class="lbl" style="left:0;width:235px;top:1929px">Pago</div>
<div class="btn" style="left:294px;top:1908px;width:147px;height:68px;border-radius:7px 0 0 7px"></div>
<div class="a" style="left:439px;top:1908px;width:134px;height:68px;background:#e7e7e7;border:2px solid #adadad;border-radius:0 7px 7px 0;box-shadow:inset 0 6px 10px rgba(0,0,0,.125)"></div>
<div class="t" style="left:320px;top:1929px;font-size:28px;color:#444">Cta Cte</div>
<div class="t" style="left:465px;top:1929px;font-size:28px;color:#333">Tarjeta</div>
<svg class="a" style="left:1005px;top:1946px" width="42" height="14" viewBox="0 0 42 14"><rect width="42" height="14" fill="#ec1c24"/><path d="M4.5 10.5c1.2-.8 3-.8 4.2 0M6.6 3.5c.9 1.2.9 2.6 0 4" stroke="#fff" stroke-width="1" fill="none"/><text x="10.5" y="9.6" font-family="Liberation Serif" font-size="6" fill="#fff">Santander</text></svg>
<div class="t" style="left:1067px;top:1937px;font-size:28px;color:#333">371595<span style="letter-spacing:-1.3px">*****</span>0859 - Venc: 10/2022</div>
<div class="bp" style="left:1525px;top:1908px;width:80px;height:68px;border-radius:6px"></div>
<div class="bp" style="left:1605px;top:1908px;width:80px;height:68px;border-radius:6px"></div>
<div class="bp" style="left:1685px;top:1908px;width:80px;height:68px;border-radius:6px"></div>
<svg class="a" style="left:1553px;top:1925px" width="28" height="30" viewBox="0 0 28 30"><path d="M22 1.5l5 5-3 3-5-5z" fill="#fff"/><path d="M17.5 6l5 5L8.5 25 3.5 20z" fill="#fff"/><path d="M2.7 21.5l4.3 4.3L.5 28.5z" fill="#fff"/></svg>
<svg class="a" style="left:1632px;top:1922px" width="25" height="31" viewBox="0 0 25 31"><path d="M8.5 4V1.5h8V4" fill="none" stroke="#fff" stroke-width="2.2"/><rect x="0" y="4" width="25" height="3.2" fill="#fff"/><path d="M2.5 8.5h20l-1.2 20.5c-.1 1.1-.9 1.8-2 1.8H5.7c-1.1 0-1.9-.7-2-1.8z" fill="#fff"/><g fill="#3c8dbc"><rect x="5.8" y="11" width="2.2" height="16"/><rect x="11.4" y="11" width="2.2" height="16"/><rect x="17" y="11" width="2.2" height="16"/></g></svg>
<svg class="a" style="left:1711px;top:1926px" width="28" height="28" viewBox="0 0 28 28"><circle cx="14" cy="14" r="13.5" fill="#fff"/><path d="M11.5 6.5h5v5h5v5h-5v5h-5v-5h-5v-5h5z" fill="#3c8dbc"/></svg>

<!-- bottom buttons -->
<div class="btn" style="left:2563px;top:2090px;width:164px;height:68px;border-radius:7px"></div>
<div class="t" style="left:2590px;top:2111px;font-size:28px;color:#444">Cancelar</div>
<div class="a" style="left:2747px;top:2090px;width:120px;height:68px;border-radius:7px;background:#07a65a;border:2px solid #06914f"></div>
<div class="t" style="left:2772px;top:2111px;font-size:28px;color:#fff">Crear</div>

</body></html>
